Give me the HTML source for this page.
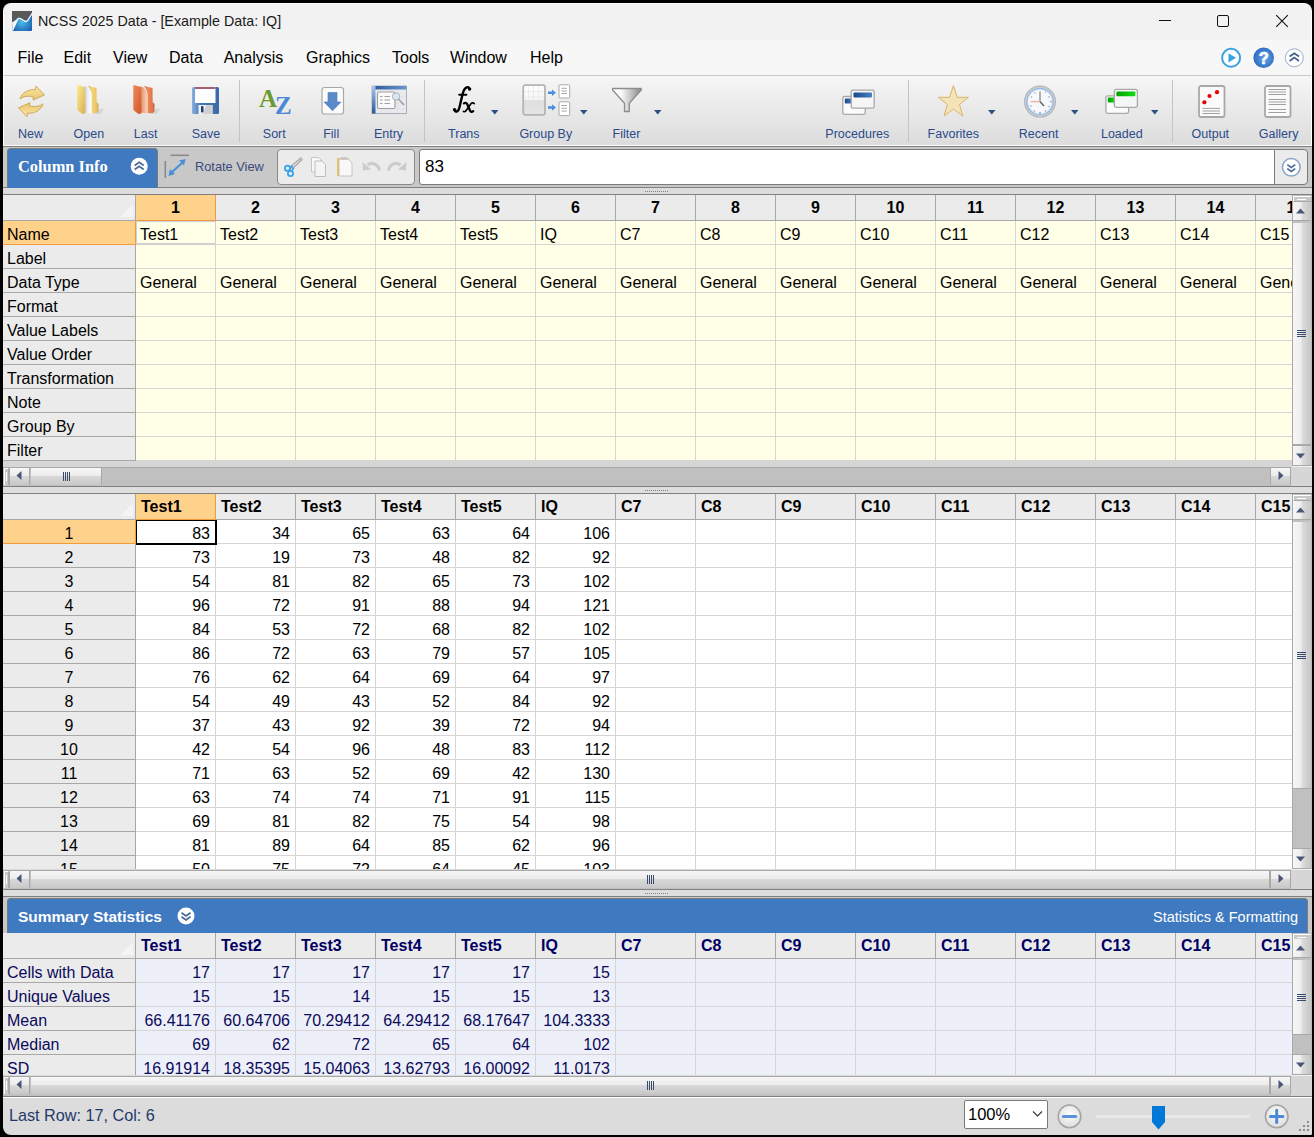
<!DOCTYPE html><html><head><meta charset="utf-8"><style>
*{box-sizing:border-box;margin:0;padding:0}
html,body{width:1314px;height:1137px;overflow:hidden;background:#f2f2f2}
body{position:relative;font-family:"Liberation Sans",sans-serif;color:#000}
.a{position:absolute}
.t{position:absolute;white-space:nowrap}
.g{position:absolute;overflow:hidden}
.c{position:absolute;white-space:nowrap;overflow:hidden;font-size:16px;line-height:24px;padding-top:2px}
.hb{font-weight:bold}
.rh{background:#ebebeb;border-right:1px solid #a8a8a8;border-bottom:1px solid #a8a8a8;padding-left:4px}
.ch{background:#ebebeb;border-right:1px solid #a8a8a8;border-bottom:1px solid #a8a8a8}
.cl{border-right:1px solid #d5d5d5;border-bottom:1px solid #d5d5d5}
.sel{background:#ffd28c!important;border-color:#f59a3c!important}
#frame{position:absolute;left:3px;top:3px;width:1309px;height:1132px;border-radius:8px 8px 1px 8px;box-shadow:0 0 0 40px #000;z-index:99;pointer-events:none}
</style></head><body><div class="a" style="left:3px;top:3px;width:1310px;height:37px;background:#f2f2f2;border-top:1px solid #fff;border-left:1px solid #fff"></div>
<div class="t" style="left:38px;top:13px;font-size:14.3px;color:#1a1a1a">NCSS 2025 Data - [Example Data: IQ]</div>
<div class="a" style="left:3px;top:40px;width:1309px;height:36px;background:#f7f7f7;border-bottom:1px solid #c8c8c8;border-left:1px solid #fff"></div>
<div class="t" style="left:17.6px;top:49px;font-size:16px;color:#000">File</div><div class="t" style="left:63.5px;top:49px;font-size:16px;color:#000">Edit</div><div class="t" style="left:113.0px;top:49px;font-size:16px;color:#000">View</div><div class="t" style="left:169.0px;top:49px;font-size:16px;color:#000">Data</div><div class="t" style="left:223.7px;top:49px;font-size:16px;color:#000">Analysis</div><div class="t" style="left:306.0px;top:49px;font-size:16px;color:#000">Graphics</div><div class="t" style="left:392.0px;top:49px;font-size:16px;color:#000">Tools</div><div class="t" style="left:450.0px;top:49px;font-size:16px;color:#000">Window</div><div class="t" style="left:530.0px;top:49px;font-size:16px;color:#000">Help</div>
<div class="a" style="left:3px;top:76px;width:1309px;height:69px;background:linear-gradient(#f6f6f6,#dcdcdc);border-left:1px solid #fff"></div>
<div class="a" style="left:3px;top:145px;width:1309px;height:1px;background:#fafafa"></div>
<div class="a" style="left:3px;top:146px;width:1309px;height:42px;background:#c8c8c8;border-top:1px solid #808080;border-bottom:1px solid #808080"></div>
<div class="a" style="left:3px;top:188px;width:1309px;height:7px;background:#dcdcdc;border-bottom:1px solid #808080"></div>
<div class="t" style="left:-19.4px;top:127px;width:100px;text-align:center;font-size:12.5px;color:#2a4a8a">New</div>
<div class="t" style="left:38.9px;top:127px;width:100px;text-align:center;font-size:12.5px;color:#2a4a8a">Open</div>
<div class="t" style="left:95.6px;top:127px;width:100px;text-align:center;font-size:12.5px;color:#2a4a8a">Last</div>
<div class="t" style="left:155.9px;top:127px;width:100px;text-align:center;font-size:12.5px;color:#2a4a8a">Save</div>
<div class="t" style="left:224.3px;top:127px;width:100px;text-align:center;font-size:12.5px;color:#2a4a8a">Sort</div>
<div class="t" style="left:281.2px;top:127px;width:100px;text-align:center;font-size:12.5px;color:#2a4a8a">Fill</div>
<div class="t" style="left:338.5px;top:127px;width:100px;text-align:center;font-size:12.5px;color:#2a4a8a">Entry</div>
<div class="t" style="left:413.8px;top:127px;width:100px;text-align:center;font-size:12.5px;color:#2a4a8a">Trans</div>
<div class="t" style="left:495.8px;top:127px;width:100px;text-align:center;font-size:12.5px;color:#2a4a8a">Group By</div>
<div class="t" style="left:576.5px;top:127px;width:100px;text-align:center;font-size:12.5px;color:#2a4a8a">Filter</div>
<div class="t" style="left:807.3px;top:127px;width:100px;text-align:center;font-size:12.5px;color:#2a4a8a">Procedures</div>
<div class="t" style="left:903.3px;top:127px;width:100px;text-align:center;font-size:12.5px;color:#2a4a8a">Favorites</div>
<div class="t" style="left:988.6px;top:127px;width:100px;text-align:center;font-size:12.5px;color:#2a4a8a">Recent</div>
<div class="t" style="left:1071.8px;top:127px;width:100px;text-align:center;font-size:12.5px;color:#2a4a8a">Loaded</div>
<div class="t" style="left:1160.3px;top:127px;width:100px;text-align:center;font-size:12.5px;color:#2a4a8a">Output</div>
<div class="t" style="left:1228.6px;top:127px;width:100px;text-align:center;font-size:12.5px;color:#2a4a8a">Gallery</div>
<div class="a" style="left:239px;top:80px;width:1px;height:62px;background:#c4c4c4"></div>
<div class="a" style="left:424px;top:80px;width:1px;height:62px;background:#c4c4c4"></div>
<div class="a" style="left:908px;top:80px;width:1px;height:62px;background:#c4c4c4"></div>
<div class="a" style="left:1172px;top:80px;width:1px;height:62px;background:#c4c4c4"></div>
<svg class="a" style="left:491px;top:110px" width="8" height="5"><path d="M0,0H7.5L3.75,4.5Z" fill="#2c4f80"/></svg>
<svg class="a" style="left:580px;top:110px" width="8" height="5"><path d="M0,0H7.5L3.75,4.5Z" fill="#2c4f80"/></svg>
<svg class="a" style="left:654px;top:110px" width="8" height="5"><path d="M0,0H7.5L3.75,4.5Z" fill="#2c4f80"/></svg>
<svg class="a" style="left:988px;top:110px" width="8" height="5"><path d="M0,0H7.5L3.75,4.5Z" fill="#2c4f80"/></svg>
<svg class="a" style="left:1071px;top:110px" width="8" height="5"><path d="M0,0H7.5L3.75,4.5Z" fill="#2c4f80"/></svg>
<svg class="a" style="left:1151px;top:110px" width="8" height="5"><path d="M0,0H7.5L3.75,4.5Z" fill="#2c4f80"/></svg>
<svg class="a" style="left:10px;top:80px" width="45" height="45" viewBox="0 0 45 45">
<defs><linearGradient id="gold" x1="0" y1="0" x2="0" y2="1"><stop offset="0" stop-color="#fbe8a8"/><stop offset="1" stop-color="#e6c468"/></linearGradient></defs>
<path id="arr" d="M10,19 C12,12 19,9 25.5,9.8 L26,6 L34.5,15 L23,20 L23.5,17 C18,15.5 13,16.5 10,19 Z" fill="url(#gold)" stroke="#c9a458" stroke-width="0.9"/>
<path d="M10,19 C12,12 19,9 25.5,9.8 L26,6 L34.5,15 L23,20 L23.5,17 C18,15.5 13,16.5 10,19 Z" transform="rotate(180 21.5 21.4)" fill="url(#gold)" stroke="#c9a458" stroke-width="0.9"/>
</svg>
<svg class="a" style="left:70px;top:80px" width="40" height="40" viewBox="0 0 40 40">
<defs><linearGradient id="fy" x1="0" y1="0" x2="1" y2="1"><stop offset="0" stop-color="#fbe98c"/><stop offset="1" stop-color="#dcb050"/></linearGradient>
<linearGradient id="fr" x1="0" y1="0" x2="1" y2="0"><stop offset="0" stop-color="#c89a40"/><stop offset="0.4" stop-color="#f4d67c"/><stop offset="1" stop-color="#e8c468"/></linearGradient>
<linearGradient id="fp" x1="0" y1="0" x2="1" y2="0"><stop offset="0" stop-color="#b8bec8"/><stop offset="0.45" stop-color="#e8eaee"/><stop offset="1" stop-color="#ffffff"/></linearGradient></defs>
<path d="M28,30 L34,28.5 L31,34 L24,34Z" fill="#c4c4c4" opacity="0.55"/>
<path d="M18,6 L26.5,8 L26.8,33 L21.5,33.3 L21.5,14 C21,10 19.5,7.5 18,6 Z" fill="url(#fr)"/>
<path d="M26.5,22 L28.6,24 L28.4,31.5 L26.6,33 Z" fill="#d8b258"/>
<path d="M14,6.5 C17,6.5 20.5,9 21.5,14 L21.5,33.5 L15,32.5 Z" fill="url(#fp)"/>
<path d="M7.3,5 L13.5,6.5 C14.8,8 15,9.5 15,12 L15.3,33.5 L12.5,34 L7.3,30 Z" fill="url(#fy)"/>
</svg>
<svg class="a" style="left:126px;top:80px" width="40" height="40" viewBox="0 0 40 40">
<defs><linearGradient id="oy" x1="0" y1="0" x2="1" y2="1"><stop offset="0" stop-color="#f08858"/><stop offset="1" stop-color="#d0582c"/></linearGradient>
<linearGradient id="or" x1="0" y1="0" x2="1" y2="0"><stop offset="0" stop-color="#c05028"/><stop offset="0.4" stop-color="#ec8a5c"/><stop offset="1" stop-color="#e07044"/></linearGradient>
<linearGradient id="op" x1="0" y1="0" x2="1" y2="0"><stop offset="0" stop-color="#d87850"/><stop offset="0.5" stop-color="#f0b090"/><stop offset="1" stop-color="#f8d0b8"/></linearGradient></defs>
<path d="M28,30 L34,28.5 L31,34 L24,34Z" fill="#c4c4c4" opacity="0.55"/>
<path d="M18,6 L26.5,8 L26.8,33 L21.5,33.3 L21.5,14 C21,10 19.5,7.5 18,6 Z" fill="url(#or)"/>
<path d="M26.5,22 L28.6,24 L28.4,31.5 L26.6,33 Z" fill="#d06838"/>
<path d="M14,6.5 C17,6.5 20.5,9 21.5,14 L21.5,33.5 L15,32.5 Z" fill="url(#op)"/>
<path d="M7.3,5 L13.5,6.5 C14.8,8 15,9.5 15,12 L15.3,33.5 L12.5,34 L7.3,30 Z" fill="url(#oy)"/>
</svg>
<svg class="a" style="left:185px;top:80px" width="45" height="45" viewBox="0 0 45 45">
<defs><linearGradient id="fb" x1="0" y1="0" x2="1" y2="0"><stop offset="0" stop-color="#8ab0e0"/><stop offset="0.3" stop-color="#4a7ab8"/><stop offset="1" stop-color="#3a68a8"/></linearGradient></defs>
<rect x="7" y="7" width="27" height="27" rx="1.5" fill="url(#fb)"/>
<rect x="10" y="7" width="20.5" height="16" fill="#fdfdfd"/>
<rect x="10" y="7" width="20.5" height="2" fill="#a86070"/>
<rect x="13.5" y="25" width="14" height="9" fill="#f0f0f0"/>
<path d="M21,25 H27.5 V34 H18 Z" fill="#d0d0d0"/>
<rect x="16" y="26" width="2.5" height="6.5" rx="1" fill="#1a3c78"/>
</svg>
<div class="t" style="left:259px;top:85px;font-family:'Liberation Serif',serif;font-weight:bold;font-size:25px;line-height:28px;color:#6a9a30">A</div>
<div class="t" style="left:275px;top:92px;font-family:'Liberation Serif',serif;font-weight:bold;font-size:25px;line-height:28px;color:#4a88d8">Z</div>
<svg class="a" style="left:315px;top:80px" width="35" height="40" viewBox="0 0 35 40">
<rect x="7" y="7.5" width="21.5" height="26.5" rx="2.5" fill="#fbfbfb" stroke="#a8a8a8" stroke-width="1.2"/>
<path d="M13,12.5 H22 V22 H26 L17.5,30.8 L9,22 H13 Z" fill="#5a8ac8" stroke="#4a7ab8" stroke-width="0.6"/>
</svg>
<svg class="a" style="left:370px;top:84px" width="40" height="32" viewBox="0 0 40 32">
<defs><linearGradient id="eb" x1="0" y1="0" x2="1" y2="0"><stop offset="0" stop-color="#2a5898"/><stop offset="1" stop-color="#6a98d0"/></linearGradient>
<linearGradient id="el" x1="0" y1="0" x2="0" y2="1"><stop offset="0" stop-color="#a8c8f0"/><stop offset="1" stop-color="#2a5898"/></linearGradient></defs>
<rect x="2" y="2" width="34.5" height="27.5" fill="#e8eaee" stroke="#9aa0a8" stroke-width="0.8"/>
<rect x="2" y="2" width="34.5" height="3.5" fill="url(#eb)"/>
<rect x="2" y="2" width="3.5" height="27.5" fill="url(#el)"/>
<path d="M6,13H36M6,19H36M6,25H36M12,6V29M20,6V29M28,6V29" stroke="#d8dce2" stroke-width="0.6"/>
<rect x="7.5" y="8" width="17.5" height="16.5" rx="1.5" fill="#fafafa" stroke="#a0a0a0" stroke-width="1.2"/>
<path d="M10,12.5H12.5M14.5,12.5H20M10,16H12.5M14.5,16H20M10,19.5H12.5M14.5,19.5H20" stroke="#a0a0a0" stroke-width="1.2"/>
<circle cx="26" cy="12.5" r="3.6" fill="#d8e8f8" stroke="#b0b0b0" stroke-width="1"/>
<path d="M28.5,15 L34,21" stroke="#a0a0a0" stroke-width="1.5"/>
</svg>
<svg class="a" style="left:445px;top:80px" width="35" height="40" viewBox="0 0 35 40">
<g fill="none" stroke="#000" stroke-linecap="round">
<path d="M9.6,30.3 C11,32.6 13.4,31.6 14.3,28 L17.6,14 C18.8,9 20.6,6.8 23.6,7.4" stroke-width="2.4"/>
<path d="M14.2,14.8 H21.4" stroke-width="1.9"/>
<path d="M18.9,23.4 C20.6,22.2 21.9,23 22.6,25 L25,30.5 C25.6,32 26.8,32.4 28.2,31.2" stroke-width="2.3"/>
<path d="M29.3,23.6 C28.1,22.3 26.6,22.8 25.6,24.2 L21.1,30.5 C20.4,31.6 19.4,32.1 18.4,31.3" stroke-width="1.6"/>
</g>
<circle cx="24.6" cy="9" r="1.7"/><circle cx="9.6" cy="29.6" r="1.7"/>
</svg>
<svg class="a" style="left:515px;top:80px" width="60" height="40" viewBox="0 0 60 40">
<defs><linearGradient id="gg" x1="0" y1="0" x2="0" y2="1"><stop offset="0" stop-color="#ffffff"/><stop offset="0.5" stop-color="#f4f4f4"/><stop offset="0.52" stop-color="#dedede"/><stop offset="1" stop-color="#e6e6e6"/></linearGradient></defs>
<rect x="8.2" y="5.2" width="21.8" height="29.6" rx="2" fill="url(#gg)" stroke="#b4b4b4" stroke-width="1.8"/>
<path d="M9,11.5H29M9,17H29M9,23H29M9,28.5H29M13.5,6V34M18.5,6V34M23.5,6V34" stroke="#e0e0e0" stroke-width="0.5"/>
<path d="M33,11.5H37V9.5L41,12.7L37,16V14H33Z" fill="#4a90e0"/>
<path d="M33,26.3H37V24.3L41,27.5L37,30.8V28.8H33Z" fill="#4a90e0"/>
<rect x="44" y="4.8" width="10.7" height="13.2" rx="1" fill="#fff" stroke="#a8a8a8" stroke-width="1"/>
<rect x="44" y="21.8" width="10.7" height="13.8" rx="1" fill="#fff" stroke="#a8a8a8" stroke-width="1"/>
<path d="M46.5,8.3H52M46.5,11H52M46.5,13.5H52M46.5,25.5H52M46.5,28.3H52M46.5,31H52" stroke="#909090" stroke-width="0.8"/>
</svg>
<svg class="a" style="left:605px;top:80px" width="45" height="40" viewBox="0 0 45 40">
<defs><linearGradient id="fg" x1="0" y1="0" x2="1" y2="0"><stop offset="0" stop-color="#ffffff"/><stop offset="0.3" stop-color="#fafafa"/><stop offset="1" stop-color="#8a8a8a"/></linearGradient></defs>
<path d="M7.6,8.5 L36.2,8.5 L36.2,10 L24.3,23.3 V31.5 H19.5 V23.3 L7.6,10 Z" fill="url(#fg)" stroke="#8c8c8c" stroke-width="1.3" stroke-linejoin="round"/>
</svg>
<svg class="a" style="left:835px;top:80px" width="50" height="35" viewBox="0 0 50 35">
<defs><linearGradient id="b1a4888" x1="0" y1="0" x2="1" y2="0"><stop offset="0" stop-color="#1a4888"/><stop offset="1" stop-color="#4a80c0"/></linearGradient></defs>
<rect x="7.8" y="16.5" width="22.5" height="17.8" rx="1.8" fill="#fbfbfb" stroke="#a8a8a8" stroke-width="1.3"/>
<rect x="9.8" y="18.5" width="8.0" height="5.0" rx="1" fill="url(#b1a4888)"/>
<rect x="16.2" y="10.2" width="23.0" height="18.0" rx="1.8" fill="#f6f6f6" stroke="#a8a8a8" stroke-width="1.3"/>
<rect x="18.5" y="12.5" width="18.5" height="5.0" rx="1" fill="url(#b1a4888)"/>
</svg>
<svg class="a" style="left:1095px;top:80px" width="50" height="35" viewBox="0 0 50 35">
<defs><linearGradient id="b00a000" x1="0" y1="0" x2="1" y2="0"><stop offset="0" stop-color="#00a000"/><stop offset="1" stop-color="#10e010"/></linearGradient></defs>
<rect x="10.9" y="15.8" width="22.7" height="17.6" rx="1.8" fill="#fbfbfb" stroke="#a8a8a8" stroke-width="1.3"/>
<rect x="12.8" y="17.6" width="8.0" height="5.0" rx="1" fill="url(#b00a000)"/>
<rect x="19.4" y="9.3" width="23.0" height="18.0" rx="1.8" fill="#f6f6f6" stroke="#a8a8a8" stroke-width="1.3"/>
<rect x="21.4" y="11.5" width="19.0" height="4.8" rx="1" fill="url(#b00a000)"/>
</svg>
<svg class="a" style="left:930px;top:80px" width="45" height="40" viewBox="0 0 45 40">
<path d="M23.4,5.6 L27.3,17.3 L38.4,17.3 L29.5,24.4 L32.8,36 L23.4,29 L14.1,36 L17.4,24.4 L8.3,17.3 L19.5,17.3 Z" fill="#f5e3b8" stroke="#dab468" stroke-width="1" stroke-linejoin="round"/>
</svg>
<svg class="a" style="left:1015px;top:80px" width="50" height="45" viewBox="0 0 50 45">
<defs><radialGradient id="cf" cx="0.5" cy="0.5" r="0.5"><stop offset="0.8" stop-color="#f6f8fc"/><stop offset="1" stop-color="#e0e8f4"/></radialGradient></defs>
<circle cx="25" cy="21.6" r="15.4" fill="#d4d4d4" stroke="#b4b4b4" stroke-width="1.2"/>
<circle cx="25" cy="21.6" r="13.2" fill="url(#cf)" stroke="#98bce8" stroke-width="1.5"/>
<path d="M25,21.6V11.5" stroke="#909090" stroke-width="1.4"/>
<path d="M25,21.6L29,26" stroke="#707070" stroke-width="1.6"/>
<path d="M25,21.6H15.5" stroke="#f0b0a0" stroke-width="1.4"/>
<g fill="#a0a0a0"><circle cx="25" cy="33" r="0.9"/><circle cx="36" cy="21.6" r="0.9"/><circle cx="30.5" cy="12" r="0.7"/><circle cx="34" cy="17" r="0.8"/><circle cx="34" cy="26.5" r="0.8"/><circle cx="30.5" cy="31" r="0.8"/><circle cx="19.5" cy="31" r="0.8"/><circle cx="16" cy="26" r="0.8"/><circle cx="16.5" cy="17" r="0.7"/><circle cx="20" cy="13" r="0.7"/></g>
</svg>
<svg class="a" style="left:1195px;top:82px" width="35" height="40" viewBox="0 0 35 40">
<rect x="4" y="4" width="25.5" height="31" rx="2" fill="#fafafa" stroke="#a8a8a8" stroke-width="1.8"/>
<circle cx="9.4" cy="20.3" r="2.1" fill="#e80000"/><circle cx="14.5" cy="14" r="2.1" fill="#e80000"/><circle cx="22" cy="10.2" r="2.1" fill="#e80000"/>
<path d="M7.5,26.4H25M7.5,29H25M7.5,31.5H25" stroke="#a0a0a0" stroke-width="1"/>
</svg>
<svg class="a" style="left:1261px;top:82px" width="35" height="40" viewBox="0 0 35 40">
<rect x="4" y="4" width="25.5" height="31" rx="2" fill="#fafafa" stroke="#a8a8a8" stroke-width="1.8"/>
<path d="M7.5,7.5H25M7.5,10H25M7.5,12.5H25M7.5,17.5H25M7.5,20H25M7.5,22.5H25M7.5,27.5H25M7.5,30.5H25" stroke="#a0a0a0" stroke-width="1"/>
</svg>
<svg class="a" style="left:1215px;top:42px" width="95" height="32" viewBox="0 0 95 32">
<defs><radialGradient id="hq" cx="0.55" cy="0.5" r="0.55"><stop offset="0" stop-color="#6aa4e8"/><stop offset="1" stop-color="#2a6ac0"/></radialGradient></defs>
<circle cx="16.1" cy="15.8" r="9" fill="#fff" stroke="#3aa2e2" stroke-width="2"/>
<path d="M13.5,11.2 L21,15.8 L13.5,20.4Z" fill="#3aa2e2"/>
<circle cx="48.7" cy="15.8" r="10.3" fill="url(#hq)"/>
<text x="48.7" y="21.6" font-family="Liberation Sans" font-weight="bold" font-size="16.5" fill="#fff" stroke="#fff" stroke-width="0.6" text-anchor="middle">?</text>
<circle cx="79.3" cy="15.8" r="9" fill="#fff" stroke="#98acc8" stroke-width="1"/>
<path d="M74.6,14.6 L79.3,11.3 L84,14.6 M74.6,18.9 L79.3,15.6 L84,18.9" fill="none" stroke="#44608c" stroke-width="1.8"/>
</svg>
<div class="a" style="left:7px;top:148px;width:151px;height:40px;background:#3f79bf;border:1px solid #7a7a78;border-bottom:none;border-radius:4px 4px 0 0"></div>
<div class="t" style="left:18px;top:157px;font-family:'Liberation Serif',serif;font-size:16.4px;font-weight:bold;color:#fff">Column Info</div>
<svg class="a" style="left:129px;top:156px" width="21" height="21" viewBox="0 0 21 21">
<circle cx="10.2" cy="10.2" r="8.5" fill="#fff"/>
<path d="M5.7,9.5 L10.2,6.3 L14.7,9.5 M5.7,13.5 L10.2,10.3 L14.7,13.5" fill="none" stroke="#4a6a98" stroke-width="1.7"/>
</svg>
<svg class="a" style="left:160px;top:150px" width="32" height="32" viewBox="0 0 32 32">
<rect x="4.5" y="11" width="1.6" height="17" fill="#8a8a8a"/>
<rect x="10.5" y="4.5" width="18.5" height="1.6" fill="#8a8a8a"/>
<path d="M11,23 L23,12" stroke="#4a90d8" stroke-width="2.2"/>
<path d="M8.5,26 L10,19 L15,24Z M25.5,9 L19,10.5 L24,15.5Z" fill="#4a90d8"/>
</svg>
<div class="t" style="left:195px;top:159px;font-size:12.8px;color:#3a4a7a">Rotate View</div>
<div class="a" style="left:277px;top:149px;width:138px;height:36px;background:#ebebeb;border:1px solid #8a8a8a;border-radius:4px"></div>
<svg class="a" style="left:280px;top:152px" width="132" height="30" viewBox="0 0 132 30">
<path d="M10,15 L21.5,5.5 M12,17 L22.5,7" stroke="#a8a8a8" stroke-width="1.4"/>
<circle cx="7.5" cy="16.3" r="2.6" fill="none" stroke="#3aa0e8" stroke-width="1.8"/>
<circle cx="10.5" cy="21.5" r="2.6" fill="none" stroke="#3aa0e8" stroke-width="1.8"/>
<path d="M9.5,16.5 L13,14 M11,19.5 L14,16" stroke="#3aa0e8" stroke-width="1.6"/>
<path d="M31.5,5.5 H38.5 L41,8 V20 H31.5 Z" fill="#f8f8f8" stroke="#c0c0c0" stroke-width="0.9"/>
<path d="M35,9 H42 L45.5,12.5 V24.5 H35 Z" fill="#f4f4f4" stroke="#b8b8b8" stroke-width="0.9"/>
<rect x="57" y="6" width="12" height="18" fill="#e8c060"/>
<path d="M59,7 H68 L72,11 V24 H59 Z" fill="#f8f8f8" stroke="#c0c0c0" stroke-width="0.9"/>
<rect x="61" y="5" width="6" height="3" fill="#c8c8c8"/>
<path d="M99.5,18.5 C98,11.5 92,9.8 87.5,13" fill="none" stroke="#cccccc" stroke-width="3.2"/>
<path d="M82.5,10 L83,18.5 L91,17.5 Z" fill="#cccccc"/>
<path d="M108.5,18.5 C110,11.5 116,9.8 120.5,13" fill="none" stroke="#cccccc" stroke-width="3.2"/>
<path d="M126.5,10 L126,18.5 L118,17.5 Z" fill="#cccccc"/>
</svg>
<div class="a" style="left:419px;top:149px;width:856px;height:36px;background:#fff;border:1px solid #7a7a7a;border-radius:3px 0 0 3px"></div>
<div class="t" style="left:425px;top:157px;font-size:17px;color:#000">83</div>
<div class="a" style="left:1274px;top:149px;width:34px;height:36px;background:#ebebeb;border:1px solid #7a7a7a;border-radius:0 4px 4px 0"></div>
<svg class="a" style="left:1281px;top:157px" width="21" height="21" viewBox="0 0 21 21">
<circle cx="10.3" cy="10.3" r="8.8" fill="#fff" stroke="#8aa4c8" stroke-width="1.5"/>
<path d="M6.3,7.6 L10.3,10.4 L14.3,7.6 M6.3,11.6 L10.3,14.4 L14.3,11.6" fill="none" stroke="#4a6a98" stroke-width="1.7"/>
</svg>
<div class="g" style="left:3px;top:195px;width:1289px;height:266px;background:#fffee6"><div class="c ch" style="left:0;top:0;width:133px;height:26px"></div><div class="c ch hb sel" style="left:133px;top:0;width:80px;height:26px;line-height:26px;padding-top:0;text-align:center;color:#000">1</div><div class="c ch hb" style="left:213px;top:0;width:80px;height:26px;line-height:26px;padding-top:0;text-align:center;color:#000">2</div><div class="c ch hb" style="left:293px;top:0;width:80px;height:26px;line-height:26px;padding-top:0;text-align:center;color:#000">3</div><div class="c ch hb" style="left:373px;top:0;width:80px;height:26px;line-height:26px;padding-top:0;text-align:center;color:#000">4</div><div class="c ch hb" style="left:453px;top:0;width:80px;height:26px;line-height:26px;padding-top:0;text-align:center;color:#000">5</div><div class="c ch hb" style="left:533px;top:0;width:80px;height:26px;line-height:26px;padding-top:0;text-align:center;color:#000">6</div><div class="c ch hb" style="left:613px;top:0;width:80px;height:26px;line-height:26px;padding-top:0;text-align:center;color:#000">7</div><div class="c ch hb" style="left:693px;top:0;width:80px;height:26px;line-height:26px;padding-top:0;text-align:center;color:#000">8</div><div class="c ch hb" style="left:773px;top:0;width:80px;height:26px;line-height:26px;padding-top:0;text-align:center;color:#000">9</div><div class="c ch hb" style="left:853px;top:0;width:80px;height:26px;line-height:26px;padding-top:0;text-align:center;color:#000">10</div><div class="c ch hb" style="left:933px;top:0;width:80px;height:26px;line-height:26px;padding-top:0;text-align:center;color:#000">11</div><div class="c ch hb" style="left:1013px;top:0;width:80px;height:26px;line-height:26px;padding-top:0;text-align:center;color:#000">12</div><div class="c ch hb" style="left:1093px;top:0;width:80px;height:26px;line-height:26px;padding-top:0;text-align:center;color:#000">13</div><div class="c ch hb" style="left:1173px;top:0;width:80px;height:26px;line-height:26px;padding-top:0;text-align:center;color:#000">14</div><div class="c ch hb" style="left:1253px;top:0;width:80px;height:26px;line-height:26px;padding-top:0;text-align:center;color:#000">15</div><div class="c rh sel" style="left:0;top:26px;width:133px;height:24px;;color:#000">Name</div><div class="c cl" style="left:133px;top:26px;width:80px;height:24px;padding-left:4px;color:#000">Test1</div><div class="c cl" style="left:213px;top:26px;width:80px;height:24px;padding-left:4px;color:#000">Test2</div><div class="c cl" style="left:293px;top:26px;width:80px;height:24px;padding-left:4px;color:#000">Test3</div><div class="c cl" style="left:373px;top:26px;width:80px;height:24px;padding-left:4px;color:#000">Test4</div><div class="c cl" style="left:453px;top:26px;width:80px;height:24px;padding-left:4px;color:#000">Test5</div><div class="c cl" style="left:533px;top:26px;width:80px;height:24px;padding-left:4px;color:#000">IQ</div><div class="c cl" style="left:613px;top:26px;width:80px;height:24px;padding-left:4px;color:#000">C7</div><div class="c cl" style="left:693px;top:26px;width:80px;height:24px;padding-left:4px;color:#000">C8</div><div class="c cl" style="left:773px;top:26px;width:80px;height:24px;padding-left:4px;color:#000">C9</div><div class="c cl" style="left:853px;top:26px;width:80px;height:24px;padding-left:4px;color:#000">C10</div><div class="c cl" style="left:933px;top:26px;width:80px;height:24px;padding-left:4px;color:#000">C11</div><div class="c cl" style="left:1013px;top:26px;width:80px;height:24px;padding-left:4px;color:#000">C12</div><div class="c cl" style="left:1093px;top:26px;width:80px;height:24px;padding-left:4px;color:#000">C13</div><div class="c cl" style="left:1173px;top:26px;width:80px;height:24px;padding-left:4px;color:#000">C14</div><div class="c cl" style="left:1253px;top:26px;width:80px;height:24px;padding-left:4px;color:#000">C15</div><div class="c rh" style="left:0;top:50px;width:133px;height:24px;;color:#000">Label</div><div class="c cl" style="left:133px;top:50px;width:80px;height:24px;padding-left:4px;color:#000"></div><div class="c cl" style="left:213px;top:50px;width:80px;height:24px;padding-left:4px;color:#000"></div><div class="c cl" style="left:293px;top:50px;width:80px;height:24px;padding-left:4px;color:#000"></div><div class="c cl" style="left:373px;top:50px;width:80px;height:24px;padding-left:4px;color:#000"></div><div class="c cl" style="left:453px;top:50px;width:80px;height:24px;padding-left:4px;color:#000"></div><div class="c cl" style="left:533px;top:50px;width:80px;height:24px;padding-left:4px;color:#000"></div><div class="c cl" style="left:613px;top:50px;width:80px;height:24px;padding-left:4px;color:#000"></div><div class="c cl" style="left:693px;top:50px;width:80px;height:24px;padding-left:4px;color:#000"></div><div class="c cl" style="left:773px;top:50px;width:80px;height:24px;padding-left:4px;color:#000"></div><div class="c cl" style="left:853px;top:50px;width:80px;height:24px;padding-left:4px;color:#000"></div><div class="c cl" style="left:933px;top:50px;width:80px;height:24px;padding-left:4px;color:#000"></div><div class="c cl" style="left:1013px;top:50px;width:80px;height:24px;padding-left:4px;color:#000"></div><div class="c cl" style="left:1093px;top:50px;width:80px;height:24px;padding-left:4px;color:#000"></div><div class="c cl" style="left:1173px;top:50px;width:80px;height:24px;padding-left:4px;color:#000"></div><div class="c cl" style="left:1253px;top:50px;width:80px;height:24px;padding-left:4px;color:#000"></div><div class="c rh" style="left:0;top:74px;width:133px;height:24px;;color:#000">Data Type</div><div class="c cl" style="left:133px;top:74px;width:80px;height:24px;padding-left:4px;color:#000">General</div><div class="c cl" style="left:213px;top:74px;width:80px;height:24px;padding-left:4px;color:#000">General</div><div class="c cl" style="left:293px;top:74px;width:80px;height:24px;padding-left:4px;color:#000">General</div><div class="c cl" style="left:373px;top:74px;width:80px;height:24px;padding-left:4px;color:#000">General</div><div class="c cl" style="left:453px;top:74px;width:80px;height:24px;padding-left:4px;color:#000">General</div><div class="c cl" style="left:533px;top:74px;width:80px;height:24px;padding-left:4px;color:#000">General</div><div class="c cl" style="left:613px;top:74px;width:80px;height:24px;padding-left:4px;color:#000">General</div><div class="c cl" style="left:693px;top:74px;width:80px;height:24px;padding-left:4px;color:#000">General</div><div class="c cl" style="left:773px;top:74px;width:80px;height:24px;padding-left:4px;color:#000">General</div><div class="c cl" style="left:853px;top:74px;width:80px;height:24px;padding-left:4px;color:#000">General</div><div class="c cl" style="left:933px;top:74px;width:80px;height:24px;padding-left:4px;color:#000">General</div><div class="c cl" style="left:1013px;top:74px;width:80px;height:24px;padding-left:4px;color:#000">General</div><div class="c cl" style="left:1093px;top:74px;width:80px;height:24px;padding-left:4px;color:#000">General</div><div class="c cl" style="left:1173px;top:74px;width:80px;height:24px;padding-left:4px;color:#000">General</div><div class="c cl" style="left:1253px;top:74px;width:80px;height:24px;padding-left:4px;color:#000">General</div><div class="c rh" style="left:0;top:98px;width:133px;height:24px;;color:#000">Format</div><div class="c cl" style="left:133px;top:98px;width:80px;height:24px;padding-left:4px;color:#000"></div><div class="c cl" style="left:213px;top:98px;width:80px;height:24px;padding-left:4px;color:#000"></div><div class="c cl" style="left:293px;top:98px;width:80px;height:24px;padding-left:4px;color:#000"></div><div class="c cl" style="left:373px;top:98px;width:80px;height:24px;padding-left:4px;color:#000"></div><div class="c cl" style="left:453px;top:98px;width:80px;height:24px;padding-left:4px;color:#000"></div><div class="c cl" style="left:533px;top:98px;width:80px;height:24px;padding-left:4px;color:#000"></div><div class="c cl" style="left:613px;top:98px;width:80px;height:24px;padding-left:4px;color:#000"></div><div class="c cl" style="left:693px;top:98px;width:80px;height:24px;padding-left:4px;color:#000"></div><div class="c cl" style="left:773px;top:98px;width:80px;height:24px;padding-left:4px;color:#000"></div><div class="c cl" style="left:853px;top:98px;width:80px;height:24px;padding-left:4px;color:#000"></div><div class="c cl" style="left:933px;top:98px;width:80px;height:24px;padding-left:4px;color:#000"></div><div class="c cl" style="left:1013px;top:98px;width:80px;height:24px;padding-left:4px;color:#000"></div><div class="c cl" style="left:1093px;top:98px;width:80px;height:24px;padding-left:4px;color:#000"></div><div class="c cl" style="left:1173px;top:98px;width:80px;height:24px;padding-left:4px;color:#000"></div><div class="c cl" style="left:1253px;top:98px;width:80px;height:24px;padding-left:4px;color:#000"></div><div class="c rh" style="left:0;top:122px;width:133px;height:24px;;color:#000">Value Labels</div><div class="c cl" style="left:133px;top:122px;width:80px;height:24px;padding-left:4px;color:#000"></div><div class="c cl" style="left:213px;top:122px;width:80px;height:24px;padding-left:4px;color:#000"></div><div class="c cl" style="left:293px;top:122px;width:80px;height:24px;padding-left:4px;color:#000"></div><div class="c cl" style="left:373px;top:122px;width:80px;height:24px;padding-left:4px;color:#000"></div><div class="c cl" style="left:453px;top:122px;width:80px;height:24px;padding-left:4px;color:#000"></div><div class="c cl" style="left:533px;top:122px;width:80px;height:24px;padding-left:4px;color:#000"></div><div class="c cl" style="left:613px;top:122px;width:80px;height:24px;padding-left:4px;color:#000"></div><div class="c cl" style="left:693px;top:122px;width:80px;height:24px;padding-left:4px;color:#000"></div><div class="c cl" style="left:773px;top:122px;width:80px;height:24px;padding-left:4px;color:#000"></div><div class="c cl" style="left:853px;top:122px;width:80px;height:24px;padding-left:4px;color:#000"></div><div class="c cl" style="left:933px;top:122px;width:80px;height:24px;padding-left:4px;color:#000"></div><div class="c cl" style="left:1013px;top:122px;width:80px;height:24px;padding-left:4px;color:#000"></div><div class="c cl" style="left:1093px;top:122px;width:80px;height:24px;padding-left:4px;color:#000"></div><div class="c cl" style="left:1173px;top:122px;width:80px;height:24px;padding-left:4px;color:#000"></div><div class="c cl" style="left:1253px;top:122px;width:80px;height:24px;padding-left:4px;color:#000"></div><div class="c rh" style="left:0;top:146px;width:133px;height:24px;;color:#000">Value Order</div><div class="c cl" style="left:133px;top:146px;width:80px;height:24px;padding-left:4px;color:#000"></div><div class="c cl" style="left:213px;top:146px;width:80px;height:24px;padding-left:4px;color:#000"></div><div class="c cl" style="left:293px;top:146px;width:80px;height:24px;padding-left:4px;color:#000"></div><div class="c cl" style="left:373px;top:146px;width:80px;height:24px;padding-left:4px;color:#000"></div><div class="c cl" style="left:453px;top:146px;width:80px;height:24px;padding-left:4px;color:#000"></div><div class="c cl" style="left:533px;top:146px;width:80px;height:24px;padding-left:4px;color:#000"></div><div class="c cl" style="left:613px;top:146px;width:80px;height:24px;padding-left:4px;color:#000"></div><div class="c cl" style="left:693px;top:146px;width:80px;height:24px;padding-left:4px;color:#000"></div><div class="c cl" style="left:773px;top:146px;width:80px;height:24px;padding-left:4px;color:#000"></div><div class="c cl" style="left:853px;top:146px;width:80px;height:24px;padding-left:4px;color:#000"></div><div class="c cl" style="left:933px;top:146px;width:80px;height:24px;padding-left:4px;color:#000"></div><div class="c cl" style="left:1013px;top:146px;width:80px;height:24px;padding-left:4px;color:#000"></div><div class="c cl" style="left:1093px;top:146px;width:80px;height:24px;padding-left:4px;color:#000"></div><div class="c cl" style="left:1173px;top:146px;width:80px;height:24px;padding-left:4px;color:#000"></div><div class="c cl" style="left:1253px;top:146px;width:80px;height:24px;padding-left:4px;color:#000"></div><div class="c rh" style="left:0;top:170px;width:133px;height:24px;;color:#000">Transformation</div><div class="c cl" style="left:133px;top:170px;width:80px;height:24px;padding-left:4px;color:#000"></div><div class="c cl" style="left:213px;top:170px;width:80px;height:24px;padding-left:4px;color:#000"></div><div class="c cl" style="left:293px;top:170px;width:80px;height:24px;padding-left:4px;color:#000"></div><div class="c cl" style="left:373px;top:170px;width:80px;height:24px;padding-left:4px;color:#000"></div><div class="c cl" style="left:453px;top:170px;width:80px;height:24px;padding-left:4px;color:#000"></div><div class="c cl" style="left:533px;top:170px;width:80px;height:24px;padding-left:4px;color:#000"></div><div class="c cl" style="left:613px;top:170px;width:80px;height:24px;padding-left:4px;color:#000"></div><div class="c cl" style="left:693px;top:170px;width:80px;height:24px;padding-left:4px;color:#000"></div><div class="c cl" style="left:773px;top:170px;width:80px;height:24px;padding-left:4px;color:#000"></div><div class="c cl" style="left:853px;top:170px;width:80px;height:24px;padding-left:4px;color:#000"></div><div class="c cl" style="left:933px;top:170px;width:80px;height:24px;padding-left:4px;color:#000"></div><div class="c cl" style="left:1013px;top:170px;width:80px;height:24px;padding-left:4px;color:#000"></div><div class="c cl" style="left:1093px;top:170px;width:80px;height:24px;padding-left:4px;color:#000"></div><div class="c cl" style="left:1173px;top:170px;width:80px;height:24px;padding-left:4px;color:#000"></div><div class="c cl" style="left:1253px;top:170px;width:80px;height:24px;padding-left:4px;color:#000"></div><div class="c rh" style="left:0;top:194px;width:133px;height:24px;;color:#000">Note</div><div class="c cl" style="left:133px;top:194px;width:80px;height:24px;padding-left:4px;color:#000"></div><div class="c cl" style="left:213px;top:194px;width:80px;height:24px;padding-left:4px;color:#000"></div><div class="c cl" style="left:293px;top:194px;width:80px;height:24px;padding-left:4px;color:#000"></div><div class="c cl" style="left:373px;top:194px;width:80px;height:24px;padding-left:4px;color:#000"></div><div class="c cl" style="left:453px;top:194px;width:80px;height:24px;padding-left:4px;color:#000"></div><div class="c cl" style="left:533px;top:194px;width:80px;height:24px;padding-left:4px;color:#000"></div><div class="c cl" style="left:613px;top:194px;width:80px;height:24px;padding-left:4px;color:#000"></div><div class="c cl" style="left:693px;top:194px;width:80px;height:24px;padding-left:4px;color:#000"></div><div class="c cl" style="left:773px;top:194px;width:80px;height:24px;padding-left:4px;color:#000"></div><div class="c cl" style="left:853px;top:194px;width:80px;height:24px;padding-left:4px;color:#000"></div><div class="c cl" style="left:933px;top:194px;width:80px;height:24px;padding-left:4px;color:#000"></div><div class="c cl" style="left:1013px;top:194px;width:80px;height:24px;padding-left:4px;color:#000"></div><div class="c cl" style="left:1093px;top:194px;width:80px;height:24px;padding-left:4px;color:#000"></div><div class="c cl" style="left:1173px;top:194px;width:80px;height:24px;padding-left:4px;color:#000"></div><div class="c cl" style="left:1253px;top:194px;width:80px;height:24px;padding-left:4px;color:#000"></div><div class="c rh" style="left:0;top:218px;width:133px;height:24px;;color:#000">Group By</div><div class="c cl" style="left:133px;top:218px;width:80px;height:24px;padding-left:4px;color:#000"></div><div class="c cl" style="left:213px;top:218px;width:80px;height:24px;padding-left:4px;color:#000"></div><div class="c cl" style="left:293px;top:218px;width:80px;height:24px;padding-left:4px;color:#000"></div><div class="c cl" style="left:373px;top:218px;width:80px;height:24px;padding-left:4px;color:#000"></div><div class="c cl" style="left:453px;top:218px;width:80px;height:24px;padding-left:4px;color:#000"></div><div class="c cl" style="left:533px;top:218px;width:80px;height:24px;padding-left:4px;color:#000"></div><div class="c cl" style="left:613px;top:218px;width:80px;height:24px;padding-left:4px;color:#000"></div><div class="c cl" style="left:693px;top:218px;width:80px;height:24px;padding-left:4px;color:#000"></div><div class="c cl" style="left:773px;top:218px;width:80px;height:24px;padding-left:4px;color:#000"></div><div class="c cl" style="left:853px;top:218px;width:80px;height:24px;padding-left:4px;color:#000"></div><div class="c cl" style="left:933px;top:218px;width:80px;height:24px;padding-left:4px;color:#000"></div><div class="c cl" style="left:1013px;top:218px;width:80px;height:24px;padding-left:4px;color:#000"></div><div class="c cl" style="left:1093px;top:218px;width:80px;height:24px;padding-left:4px;color:#000"></div><div class="c cl" style="left:1173px;top:218px;width:80px;height:24px;padding-left:4px;color:#000"></div><div class="c cl" style="left:1253px;top:218px;width:80px;height:24px;padding-left:4px;color:#000"></div><div class="c rh" style="left:0;top:242px;width:133px;height:24px;;color:#000">Filter</div><div class="c cl" style="left:133px;top:242px;width:80px;height:24px;padding-left:4px;color:#000"></div><div class="c cl" style="left:213px;top:242px;width:80px;height:24px;padding-left:4px;color:#000"></div><div class="c cl" style="left:293px;top:242px;width:80px;height:24px;padding-left:4px;color:#000"></div><div class="c cl" style="left:373px;top:242px;width:80px;height:24px;padding-left:4px;color:#000"></div><div class="c cl" style="left:453px;top:242px;width:80px;height:24px;padding-left:4px;color:#000"></div><div class="c cl" style="left:533px;top:242px;width:80px;height:24px;padding-left:4px;color:#000"></div><div class="c cl" style="left:613px;top:242px;width:80px;height:24px;padding-left:4px;color:#000"></div><div class="c cl" style="left:693px;top:242px;width:80px;height:24px;padding-left:4px;color:#000"></div><div class="c cl" style="left:773px;top:242px;width:80px;height:24px;padding-left:4px;color:#000"></div><div class="c cl" style="left:853px;top:242px;width:80px;height:24px;padding-left:4px;color:#000"></div><div class="c cl" style="left:933px;top:242px;width:80px;height:24px;padding-left:4px;color:#000"></div><div class="c cl" style="left:1013px;top:242px;width:80px;height:24px;padding-left:4px;color:#000"></div><div class="c cl" style="left:1093px;top:242px;width:80px;height:24px;padding-left:4px;color:#000"></div><div class="c cl" style="left:1173px;top:242px;width:80px;height:24px;padding-left:4px;color:#000"></div><div class="c cl" style="left:1253px;top:242px;width:80px;height:24px;padding-left:4px;color:#000"></div></div>
<div class="a" style="left:3px;top:461px;width:1289px;height:6px;background:#d6d6d6"></div>
<div class="a" style="left:1292px;top:195px;width:20px;height:271px;background:#c0c0c0;border-left:1px solid #a8a8a8;border-right:1px solid #b8b8b8"></div><div class="a" style="left:1293px;top:196px;width:18px;height:6px;background:#c8c8c8;border-top:1px solid #fff;border-left:1px solid #fff;border-bottom:1px solid #a8a8a8"></div><div class="a" style="left:1297px;top:199px;width:9px;height:1px;background:#fff"></div><div class="a" style="left:1293px;top:202px;width:18px;height:19px;background:linear-gradient(90deg,#f6f6f6 0%,#eeeeee 45%,#dcdcdc 50%,#c6c6c6 100%);border-bottom:1px solid #a8a8a8"></div><svg class="a" style="left:1296px;top:208px" width="10" height="6"><path d="M0,5.5 L4.5,0.5 L9,5.5Z" fill="#4a5678"/></svg><div class="a" style="left:1293px;top:223px;width:18px;height:222px;background:linear-gradient(90deg,#f6f6f6 0%,#eeeeee 45%,#dcdcdc 50%,#c6c6c6 100%);border-bottom:1px solid #a8a8a8"></div><svg class="a" style="left:1297px;top:329px" width="10" height="9"><g fill="#3a4a6a"><rect x="0" y="1" width="9" height="1"/><rect x="0" y="3" width="9" height="1"/><rect x="0" y="5" width="9" height="1"/><rect x="0" y="7" width="9" height="1"/></g></svg><div class="a" style="left:1293px;top:445px;width:18px;height:21px;background:linear-gradient(90deg,#f6f6f6 0%,#eeeeee 45%,#dcdcdc 50%,#c6c6c6 100%);border-top:1px solid #a8a8a8;border-bottom:1px solid #a8a8a8"></div><svg class="a" style="left:1296px;top:453px" width="10" height="6"><path d="M0,0.5 L9,0.5 L4.5,5.5Z" fill="#4a5678"/></svg>
<div class="a" style="left:3px;top:467px;width:1288px;height:20px;background:#c0c0c0;border-top:1px solid #a8a8a8;border-bottom:1px solid #808080"></div><div class="a" style="left:1291px;top:467px;width:21px;height:20px;background:#d6d6d6;border-bottom:1px solid #808080"></div><div class="a" style="left:4px;top:468px;width:5px;height:17px;background:#c8c8c8;border-left:1px solid #fff;border-top:1px solid #fff;border-right:1px solid #a8a8a8"></div><div class="a" style="left:6px;top:472px;width:1px;height:9px;background:#fff"></div><div class="a" style="left:9px;top:468px;width:21px;height:17px;background:linear-gradient(180deg,#f6f6f6 0%,#ececec 45%,#d8d8d8 50%,#c8c8c8 100%);border-left:1px solid #a8a8a8;border-right:1px solid #a8a8a8"></div><svg class="a" style="left:16px;top:471px" width="6" height="10"><path d="M5.5,0 L0.5,4.5 L5.5,9Z" fill="#4a5678"/></svg><div class="a" style="left:31px;top:468px;width:71px;height:17px;background:linear-gradient(180deg,#f6f6f6 0%,#ececec 45%,#d8d8d8 50%,#c8c8c8 100%);border-right:1px solid #a8a8a8"></div><svg class="a" style="left:62px;top:471px" width="9" height="10"><g fill="#3a4a6a"><rect x="1" y="1" width="1" height="9"/><rect x="3" y="1" width="1" height="9"/><rect x="5" y="1" width="1" height="9"/><rect x="7" y="1" width="1" height="9"/></g></svg><div class="a" style="left:1270px;top:468px;width:21px;height:17px;background:linear-gradient(180deg,#f6f6f6 0%,#ececec 45%,#d8d8d8 50%,#c8c8c8 100%);border-left:1px solid #a8a8a8;border-right:1px solid #a8a8a8"></div><svg class="a" style="left:1278px;top:471px" width="6" height="10"><path d="M0.5,0 L5.5,4.5 L0.5,9Z" fill="#4a5678"/></svg>
<div class="a" style="left:3px;top:487px;width:1309px;height:7px;background:#dedede;border-bottom:1px solid #808080"></div>
<div class="a" style="left:1292px;top:494px;width:20px;height:375px;background:#c0c0c0;border-left:1px solid #a8a8a8;border-right:1px solid #b8b8b8"></div><div class="a" style="left:1293px;top:495px;width:18px;height:6px;background:#c8c8c8;border-top:1px solid #fff;border-left:1px solid #fff;border-bottom:1px solid #a8a8a8"></div><div class="a" style="left:1297px;top:498px;width:9px;height:1px;background:#fff"></div><div class="a" style="left:1293px;top:501px;width:18px;height:19px;background:linear-gradient(90deg,#f6f6f6 0%,#eeeeee 45%,#dcdcdc 50%,#c6c6c6 100%);border-bottom:1px solid #a8a8a8"></div><svg class="a" style="left:1296px;top:507px" width="10" height="6"><path d="M0,5.5 L4.5,0.5 L9,5.5Z" fill="#4a5678"/></svg><div class="a" style="left:1293px;top:522px;width:18px;height:267px;background:linear-gradient(90deg,#f6f6f6 0%,#eeeeee 45%,#dcdcdc 50%,#c6c6c6 100%);border-bottom:1px solid #a8a8a8"></div><svg class="a" style="left:1297px;top:651px" width="10" height="9"><g fill="#3a4a6a"><rect x="0" y="1" width="9" height="1"/><rect x="0" y="3" width="9" height="1"/><rect x="0" y="5" width="9" height="1"/><rect x="0" y="7" width="9" height="1"/></g></svg><div class="a" style="left:1293px;top:848px;width:18px;height:21px;background:linear-gradient(90deg,#f6f6f6 0%,#eeeeee 45%,#dcdcdc 50%,#c6c6c6 100%);border-top:1px solid #a8a8a8;border-bottom:1px solid #a8a8a8"></div><svg class="a" style="left:1296px;top:856px" width="10" height="6"><path d="M0,0.5 L9,0.5 L4.5,5.5Z" fill="#4a5678"/></svg>
<div class="a" style="left:3px;top:870px;width:1288px;height:20px;background:#c0c0c0;border-top:1px solid #a8a8a8;border-bottom:1px solid #808080"></div><div class="a" style="left:1291px;top:870px;width:21px;height:20px;background:#d6d6d6;border-bottom:1px solid #808080"></div><div class="a" style="left:4px;top:871px;width:5px;height:17px;background:#c8c8c8;border-left:1px solid #fff;border-top:1px solid #fff;border-right:1px solid #a8a8a8"></div><div class="a" style="left:6px;top:875px;width:1px;height:9px;background:#fff"></div><div class="a" style="left:9px;top:871px;width:21px;height:17px;background:linear-gradient(180deg,#f6f6f6 0%,#ececec 45%,#d8d8d8 50%,#c8c8c8 100%);border-left:1px solid #a8a8a8;border-right:1px solid #a8a8a8"></div><svg class="a" style="left:16px;top:874px" width="6" height="10"><path d="M5.5,0 L0.5,4.5 L5.5,9Z" fill="#4a5678"/></svg><div class="a" style="left:31px;top:871px;width:1239px;height:17px;background:linear-gradient(180deg,#f6f6f6 0%,#ececec 45%,#d8d8d8 50%,#c8c8c8 100%);border-right:1px solid #a8a8a8"></div><svg class="a" style="left:646px;top:874px" width="9" height="10"><g fill="#3a4a6a"><rect x="1" y="1" width="1" height="9"/><rect x="3" y="1" width="1" height="9"/><rect x="5" y="1" width="1" height="9"/><rect x="7" y="1" width="1" height="9"/></g></svg><div class="a" style="left:1270px;top:871px;width:21px;height:17px;background:linear-gradient(180deg,#f6f6f6 0%,#ececec 45%,#d8d8d8 50%,#c8c8c8 100%);border-left:1px solid #a8a8a8;border-right:1px solid #a8a8a8"></div><svg class="a" style="left:1278px;top:874px" width="6" height="10"><path d="M0.5,0 L5.5,4.5 L0.5,9Z" fill="#4a5678"/></svg>
<div class="g" style="left:3px;top:494px;width:1289px;height:376px;background:#fff"><div class="c ch" style="left:0;top:0;width:133px;height:26px"></div><div class="c ch hb sel" style="left:133px;top:0;width:80px;height:26px;line-height:26px;padding-top:0;padding-left:5px;color:#000">Test1</div><div class="c ch hb" style="left:213px;top:0;width:80px;height:26px;line-height:26px;padding-top:0;padding-left:5px;color:#000">Test2</div><div class="c ch hb" style="left:293px;top:0;width:80px;height:26px;line-height:26px;padding-top:0;padding-left:5px;color:#000">Test3</div><div class="c ch hb" style="left:373px;top:0;width:80px;height:26px;line-height:26px;padding-top:0;padding-left:5px;color:#000">Test4</div><div class="c ch hb" style="left:453px;top:0;width:80px;height:26px;line-height:26px;padding-top:0;padding-left:5px;color:#000">Test5</div><div class="c ch hb" style="left:533px;top:0;width:80px;height:26px;line-height:26px;padding-top:0;padding-left:5px;color:#000">IQ</div><div class="c ch hb" style="left:613px;top:0;width:80px;height:26px;line-height:26px;padding-top:0;padding-left:5px;color:#000">C7</div><div class="c ch hb" style="left:693px;top:0;width:80px;height:26px;line-height:26px;padding-top:0;padding-left:5px;color:#000">C8</div><div class="c ch hb" style="left:773px;top:0;width:80px;height:26px;line-height:26px;padding-top:0;padding-left:5px;color:#000">C9</div><div class="c ch hb" style="left:853px;top:0;width:80px;height:26px;line-height:26px;padding-top:0;padding-left:5px;color:#000">C10</div><div class="c ch hb" style="left:933px;top:0;width:80px;height:26px;line-height:26px;padding-top:0;padding-left:5px;color:#000">C11</div><div class="c ch hb" style="left:1013px;top:0;width:80px;height:26px;line-height:26px;padding-top:0;padding-left:5px;color:#000">C12</div><div class="c ch hb" style="left:1093px;top:0;width:80px;height:26px;line-height:26px;padding-top:0;padding-left:5px;color:#000">C13</div><div class="c ch hb" style="left:1173px;top:0;width:80px;height:26px;line-height:26px;padding-top:0;padding-left:5px;color:#000">C14</div><div class="c ch hb" style="left:1253px;top:0;width:80px;height:26px;line-height:26px;padding-top:0;padding-left:5px;color:#000">C15</div><div class="c rh sel" style="left:0;top:26px;width:133px;height:24px;text-align:center;padding-left:0;color:#000">1</div><div class="c cl" style="left:133px;top:26px;width:80px;height:24px;text-align:right;padding-right:5px;color:#000">83</div><div class="c cl" style="left:213px;top:26px;width:80px;height:24px;text-align:right;padding-right:5px;color:#000">34</div><div class="c cl" style="left:293px;top:26px;width:80px;height:24px;text-align:right;padding-right:5px;color:#000">65</div><div class="c cl" style="left:373px;top:26px;width:80px;height:24px;text-align:right;padding-right:5px;color:#000">63</div><div class="c cl" style="left:453px;top:26px;width:80px;height:24px;text-align:right;padding-right:5px;color:#000">64</div><div class="c cl" style="left:533px;top:26px;width:80px;height:24px;text-align:right;padding-right:5px;color:#000">106</div><div class="c cl" style="left:613px;top:26px;width:80px;height:24px;text-align:right;padding-right:5px;color:#000"></div><div class="c cl" style="left:693px;top:26px;width:80px;height:24px;text-align:right;padding-right:5px;color:#000"></div><div class="c cl" style="left:773px;top:26px;width:80px;height:24px;text-align:right;padding-right:5px;color:#000"></div><div class="c cl" style="left:853px;top:26px;width:80px;height:24px;text-align:right;padding-right:5px;color:#000"></div><div class="c cl" style="left:933px;top:26px;width:80px;height:24px;text-align:right;padding-right:5px;color:#000"></div><div class="c cl" style="left:1013px;top:26px;width:80px;height:24px;text-align:right;padding-right:5px;color:#000"></div><div class="c cl" style="left:1093px;top:26px;width:80px;height:24px;text-align:right;padding-right:5px;color:#000"></div><div class="c cl" style="left:1173px;top:26px;width:80px;height:24px;text-align:right;padding-right:5px;color:#000"></div><div class="c cl" style="left:1253px;top:26px;width:80px;height:24px;text-align:right;padding-right:5px;color:#000"></div><div class="c rh" style="left:0;top:50px;width:133px;height:24px;text-align:center;padding-left:0;color:#000">2</div><div class="c cl" style="left:133px;top:50px;width:80px;height:24px;text-align:right;padding-right:5px;color:#000">73</div><div class="c cl" style="left:213px;top:50px;width:80px;height:24px;text-align:right;padding-right:5px;color:#000">19</div><div class="c cl" style="left:293px;top:50px;width:80px;height:24px;text-align:right;padding-right:5px;color:#000">73</div><div class="c cl" style="left:373px;top:50px;width:80px;height:24px;text-align:right;padding-right:5px;color:#000">48</div><div class="c cl" style="left:453px;top:50px;width:80px;height:24px;text-align:right;padding-right:5px;color:#000">82</div><div class="c cl" style="left:533px;top:50px;width:80px;height:24px;text-align:right;padding-right:5px;color:#000">92</div><div class="c cl" style="left:613px;top:50px;width:80px;height:24px;text-align:right;padding-right:5px;color:#000"></div><div class="c cl" style="left:693px;top:50px;width:80px;height:24px;text-align:right;padding-right:5px;color:#000"></div><div class="c cl" style="left:773px;top:50px;width:80px;height:24px;text-align:right;padding-right:5px;color:#000"></div><div class="c cl" style="left:853px;top:50px;width:80px;height:24px;text-align:right;padding-right:5px;color:#000"></div><div class="c cl" style="left:933px;top:50px;width:80px;height:24px;text-align:right;padding-right:5px;color:#000"></div><div class="c cl" style="left:1013px;top:50px;width:80px;height:24px;text-align:right;padding-right:5px;color:#000"></div><div class="c cl" style="left:1093px;top:50px;width:80px;height:24px;text-align:right;padding-right:5px;color:#000"></div><div class="c cl" style="left:1173px;top:50px;width:80px;height:24px;text-align:right;padding-right:5px;color:#000"></div><div class="c cl" style="left:1253px;top:50px;width:80px;height:24px;text-align:right;padding-right:5px;color:#000"></div><div class="c rh" style="left:0;top:74px;width:133px;height:24px;text-align:center;padding-left:0;color:#000">3</div><div class="c cl" style="left:133px;top:74px;width:80px;height:24px;text-align:right;padding-right:5px;color:#000">54</div><div class="c cl" style="left:213px;top:74px;width:80px;height:24px;text-align:right;padding-right:5px;color:#000">81</div><div class="c cl" style="left:293px;top:74px;width:80px;height:24px;text-align:right;padding-right:5px;color:#000">82</div><div class="c cl" style="left:373px;top:74px;width:80px;height:24px;text-align:right;padding-right:5px;color:#000">65</div><div class="c cl" style="left:453px;top:74px;width:80px;height:24px;text-align:right;padding-right:5px;color:#000">73</div><div class="c cl" style="left:533px;top:74px;width:80px;height:24px;text-align:right;padding-right:5px;color:#000">102</div><div class="c cl" style="left:613px;top:74px;width:80px;height:24px;text-align:right;padding-right:5px;color:#000"></div><div class="c cl" style="left:693px;top:74px;width:80px;height:24px;text-align:right;padding-right:5px;color:#000"></div><div class="c cl" style="left:773px;top:74px;width:80px;height:24px;text-align:right;padding-right:5px;color:#000"></div><div class="c cl" style="left:853px;top:74px;width:80px;height:24px;text-align:right;padding-right:5px;color:#000"></div><div class="c cl" style="left:933px;top:74px;width:80px;height:24px;text-align:right;padding-right:5px;color:#000"></div><div class="c cl" style="left:1013px;top:74px;width:80px;height:24px;text-align:right;padding-right:5px;color:#000"></div><div class="c cl" style="left:1093px;top:74px;width:80px;height:24px;text-align:right;padding-right:5px;color:#000"></div><div class="c cl" style="left:1173px;top:74px;width:80px;height:24px;text-align:right;padding-right:5px;color:#000"></div><div class="c cl" style="left:1253px;top:74px;width:80px;height:24px;text-align:right;padding-right:5px;color:#000"></div><div class="c rh" style="left:0;top:98px;width:133px;height:24px;text-align:center;padding-left:0;color:#000">4</div><div class="c cl" style="left:133px;top:98px;width:80px;height:24px;text-align:right;padding-right:5px;color:#000">96</div><div class="c cl" style="left:213px;top:98px;width:80px;height:24px;text-align:right;padding-right:5px;color:#000">72</div><div class="c cl" style="left:293px;top:98px;width:80px;height:24px;text-align:right;padding-right:5px;color:#000">91</div><div class="c cl" style="left:373px;top:98px;width:80px;height:24px;text-align:right;padding-right:5px;color:#000">88</div><div class="c cl" style="left:453px;top:98px;width:80px;height:24px;text-align:right;padding-right:5px;color:#000">94</div><div class="c cl" style="left:533px;top:98px;width:80px;height:24px;text-align:right;padding-right:5px;color:#000">121</div><div class="c cl" style="left:613px;top:98px;width:80px;height:24px;text-align:right;padding-right:5px;color:#000"></div><div class="c cl" style="left:693px;top:98px;width:80px;height:24px;text-align:right;padding-right:5px;color:#000"></div><div class="c cl" style="left:773px;top:98px;width:80px;height:24px;text-align:right;padding-right:5px;color:#000"></div><div class="c cl" style="left:853px;top:98px;width:80px;height:24px;text-align:right;padding-right:5px;color:#000"></div><div class="c cl" style="left:933px;top:98px;width:80px;height:24px;text-align:right;padding-right:5px;color:#000"></div><div class="c cl" style="left:1013px;top:98px;width:80px;height:24px;text-align:right;padding-right:5px;color:#000"></div><div class="c cl" style="left:1093px;top:98px;width:80px;height:24px;text-align:right;padding-right:5px;color:#000"></div><div class="c cl" style="left:1173px;top:98px;width:80px;height:24px;text-align:right;padding-right:5px;color:#000"></div><div class="c cl" style="left:1253px;top:98px;width:80px;height:24px;text-align:right;padding-right:5px;color:#000"></div><div class="c rh" style="left:0;top:122px;width:133px;height:24px;text-align:center;padding-left:0;color:#000">5</div><div class="c cl" style="left:133px;top:122px;width:80px;height:24px;text-align:right;padding-right:5px;color:#000">84</div><div class="c cl" style="left:213px;top:122px;width:80px;height:24px;text-align:right;padding-right:5px;color:#000">53</div><div class="c cl" style="left:293px;top:122px;width:80px;height:24px;text-align:right;padding-right:5px;color:#000">72</div><div class="c cl" style="left:373px;top:122px;width:80px;height:24px;text-align:right;padding-right:5px;color:#000">68</div><div class="c cl" style="left:453px;top:122px;width:80px;height:24px;text-align:right;padding-right:5px;color:#000">82</div><div class="c cl" style="left:533px;top:122px;width:80px;height:24px;text-align:right;padding-right:5px;color:#000">102</div><div class="c cl" style="left:613px;top:122px;width:80px;height:24px;text-align:right;padding-right:5px;color:#000"></div><div class="c cl" style="left:693px;top:122px;width:80px;height:24px;text-align:right;padding-right:5px;color:#000"></div><div class="c cl" style="left:773px;top:122px;width:80px;height:24px;text-align:right;padding-right:5px;color:#000"></div><div class="c cl" style="left:853px;top:122px;width:80px;height:24px;text-align:right;padding-right:5px;color:#000"></div><div class="c cl" style="left:933px;top:122px;width:80px;height:24px;text-align:right;padding-right:5px;color:#000"></div><div class="c cl" style="left:1013px;top:122px;width:80px;height:24px;text-align:right;padding-right:5px;color:#000"></div><div class="c cl" style="left:1093px;top:122px;width:80px;height:24px;text-align:right;padding-right:5px;color:#000"></div><div class="c cl" style="left:1173px;top:122px;width:80px;height:24px;text-align:right;padding-right:5px;color:#000"></div><div class="c cl" style="left:1253px;top:122px;width:80px;height:24px;text-align:right;padding-right:5px;color:#000"></div><div class="c rh" style="left:0;top:146px;width:133px;height:24px;text-align:center;padding-left:0;color:#000">6</div><div class="c cl" style="left:133px;top:146px;width:80px;height:24px;text-align:right;padding-right:5px;color:#000">86</div><div class="c cl" style="left:213px;top:146px;width:80px;height:24px;text-align:right;padding-right:5px;color:#000">72</div><div class="c cl" style="left:293px;top:146px;width:80px;height:24px;text-align:right;padding-right:5px;color:#000">63</div><div class="c cl" style="left:373px;top:146px;width:80px;height:24px;text-align:right;padding-right:5px;color:#000">79</div><div class="c cl" style="left:453px;top:146px;width:80px;height:24px;text-align:right;padding-right:5px;color:#000">57</div><div class="c cl" style="left:533px;top:146px;width:80px;height:24px;text-align:right;padding-right:5px;color:#000">105</div><div class="c cl" style="left:613px;top:146px;width:80px;height:24px;text-align:right;padding-right:5px;color:#000"></div><div class="c cl" style="left:693px;top:146px;width:80px;height:24px;text-align:right;padding-right:5px;color:#000"></div><div class="c cl" style="left:773px;top:146px;width:80px;height:24px;text-align:right;padding-right:5px;color:#000"></div><div class="c cl" style="left:853px;top:146px;width:80px;height:24px;text-align:right;padding-right:5px;color:#000"></div><div class="c cl" style="left:933px;top:146px;width:80px;height:24px;text-align:right;padding-right:5px;color:#000"></div><div class="c cl" style="left:1013px;top:146px;width:80px;height:24px;text-align:right;padding-right:5px;color:#000"></div><div class="c cl" style="left:1093px;top:146px;width:80px;height:24px;text-align:right;padding-right:5px;color:#000"></div><div class="c cl" style="left:1173px;top:146px;width:80px;height:24px;text-align:right;padding-right:5px;color:#000"></div><div class="c cl" style="left:1253px;top:146px;width:80px;height:24px;text-align:right;padding-right:5px;color:#000"></div><div class="c rh" style="left:0;top:170px;width:133px;height:24px;text-align:center;padding-left:0;color:#000">7</div><div class="c cl" style="left:133px;top:170px;width:80px;height:24px;text-align:right;padding-right:5px;color:#000">76</div><div class="c cl" style="left:213px;top:170px;width:80px;height:24px;text-align:right;padding-right:5px;color:#000">62</div><div class="c cl" style="left:293px;top:170px;width:80px;height:24px;text-align:right;padding-right:5px;color:#000">64</div><div class="c cl" style="left:373px;top:170px;width:80px;height:24px;text-align:right;padding-right:5px;color:#000">69</div><div class="c cl" style="left:453px;top:170px;width:80px;height:24px;text-align:right;padding-right:5px;color:#000">64</div><div class="c cl" style="left:533px;top:170px;width:80px;height:24px;text-align:right;padding-right:5px;color:#000">97</div><div class="c cl" style="left:613px;top:170px;width:80px;height:24px;text-align:right;padding-right:5px;color:#000"></div><div class="c cl" style="left:693px;top:170px;width:80px;height:24px;text-align:right;padding-right:5px;color:#000"></div><div class="c cl" style="left:773px;top:170px;width:80px;height:24px;text-align:right;padding-right:5px;color:#000"></div><div class="c cl" style="left:853px;top:170px;width:80px;height:24px;text-align:right;padding-right:5px;color:#000"></div><div class="c cl" style="left:933px;top:170px;width:80px;height:24px;text-align:right;padding-right:5px;color:#000"></div><div class="c cl" style="left:1013px;top:170px;width:80px;height:24px;text-align:right;padding-right:5px;color:#000"></div><div class="c cl" style="left:1093px;top:170px;width:80px;height:24px;text-align:right;padding-right:5px;color:#000"></div><div class="c cl" style="left:1173px;top:170px;width:80px;height:24px;text-align:right;padding-right:5px;color:#000"></div><div class="c cl" style="left:1253px;top:170px;width:80px;height:24px;text-align:right;padding-right:5px;color:#000"></div><div class="c rh" style="left:0;top:194px;width:133px;height:24px;text-align:center;padding-left:0;color:#000">8</div><div class="c cl" style="left:133px;top:194px;width:80px;height:24px;text-align:right;padding-right:5px;color:#000">54</div><div class="c cl" style="left:213px;top:194px;width:80px;height:24px;text-align:right;padding-right:5px;color:#000">49</div><div class="c cl" style="left:293px;top:194px;width:80px;height:24px;text-align:right;padding-right:5px;color:#000">43</div><div class="c cl" style="left:373px;top:194px;width:80px;height:24px;text-align:right;padding-right:5px;color:#000">52</div><div class="c cl" style="left:453px;top:194px;width:80px;height:24px;text-align:right;padding-right:5px;color:#000">84</div><div class="c cl" style="left:533px;top:194px;width:80px;height:24px;text-align:right;padding-right:5px;color:#000">92</div><div class="c cl" style="left:613px;top:194px;width:80px;height:24px;text-align:right;padding-right:5px;color:#000"></div><div class="c cl" style="left:693px;top:194px;width:80px;height:24px;text-align:right;padding-right:5px;color:#000"></div><div class="c cl" style="left:773px;top:194px;width:80px;height:24px;text-align:right;padding-right:5px;color:#000"></div><div class="c cl" style="left:853px;top:194px;width:80px;height:24px;text-align:right;padding-right:5px;color:#000"></div><div class="c cl" style="left:933px;top:194px;width:80px;height:24px;text-align:right;padding-right:5px;color:#000"></div><div class="c cl" style="left:1013px;top:194px;width:80px;height:24px;text-align:right;padding-right:5px;color:#000"></div><div class="c cl" style="left:1093px;top:194px;width:80px;height:24px;text-align:right;padding-right:5px;color:#000"></div><div class="c cl" style="left:1173px;top:194px;width:80px;height:24px;text-align:right;padding-right:5px;color:#000"></div><div class="c cl" style="left:1253px;top:194px;width:80px;height:24px;text-align:right;padding-right:5px;color:#000"></div><div class="c rh" style="left:0;top:218px;width:133px;height:24px;text-align:center;padding-left:0;color:#000">9</div><div class="c cl" style="left:133px;top:218px;width:80px;height:24px;text-align:right;padding-right:5px;color:#000">37</div><div class="c cl" style="left:213px;top:218px;width:80px;height:24px;text-align:right;padding-right:5px;color:#000">43</div><div class="c cl" style="left:293px;top:218px;width:80px;height:24px;text-align:right;padding-right:5px;color:#000">92</div><div class="c cl" style="left:373px;top:218px;width:80px;height:24px;text-align:right;padding-right:5px;color:#000">39</div><div class="c cl" style="left:453px;top:218px;width:80px;height:24px;text-align:right;padding-right:5px;color:#000">72</div><div class="c cl" style="left:533px;top:218px;width:80px;height:24px;text-align:right;padding-right:5px;color:#000">94</div><div class="c cl" style="left:613px;top:218px;width:80px;height:24px;text-align:right;padding-right:5px;color:#000"></div><div class="c cl" style="left:693px;top:218px;width:80px;height:24px;text-align:right;padding-right:5px;color:#000"></div><div class="c cl" style="left:773px;top:218px;width:80px;height:24px;text-align:right;padding-right:5px;color:#000"></div><div class="c cl" style="left:853px;top:218px;width:80px;height:24px;text-align:right;padding-right:5px;color:#000"></div><div class="c cl" style="left:933px;top:218px;width:80px;height:24px;text-align:right;padding-right:5px;color:#000"></div><div class="c cl" style="left:1013px;top:218px;width:80px;height:24px;text-align:right;padding-right:5px;color:#000"></div><div class="c cl" style="left:1093px;top:218px;width:80px;height:24px;text-align:right;padding-right:5px;color:#000"></div><div class="c cl" style="left:1173px;top:218px;width:80px;height:24px;text-align:right;padding-right:5px;color:#000"></div><div class="c cl" style="left:1253px;top:218px;width:80px;height:24px;text-align:right;padding-right:5px;color:#000"></div><div class="c rh" style="left:0;top:242px;width:133px;height:24px;text-align:center;padding-left:0;color:#000">10</div><div class="c cl" style="left:133px;top:242px;width:80px;height:24px;text-align:right;padding-right:5px;color:#000">42</div><div class="c cl" style="left:213px;top:242px;width:80px;height:24px;text-align:right;padding-right:5px;color:#000">54</div><div class="c cl" style="left:293px;top:242px;width:80px;height:24px;text-align:right;padding-right:5px;color:#000">96</div><div class="c cl" style="left:373px;top:242px;width:80px;height:24px;text-align:right;padding-right:5px;color:#000">48</div><div class="c cl" style="left:453px;top:242px;width:80px;height:24px;text-align:right;padding-right:5px;color:#000">83</div><div class="c cl" style="left:533px;top:242px;width:80px;height:24px;text-align:right;padding-right:5px;color:#000">112</div><div class="c cl" style="left:613px;top:242px;width:80px;height:24px;text-align:right;padding-right:5px;color:#000"></div><div class="c cl" style="left:693px;top:242px;width:80px;height:24px;text-align:right;padding-right:5px;color:#000"></div><div class="c cl" style="left:773px;top:242px;width:80px;height:24px;text-align:right;padding-right:5px;color:#000"></div><div class="c cl" style="left:853px;top:242px;width:80px;height:24px;text-align:right;padding-right:5px;color:#000"></div><div class="c cl" style="left:933px;top:242px;width:80px;height:24px;text-align:right;padding-right:5px;color:#000"></div><div class="c cl" style="left:1013px;top:242px;width:80px;height:24px;text-align:right;padding-right:5px;color:#000"></div><div class="c cl" style="left:1093px;top:242px;width:80px;height:24px;text-align:right;padding-right:5px;color:#000"></div><div class="c cl" style="left:1173px;top:242px;width:80px;height:24px;text-align:right;padding-right:5px;color:#000"></div><div class="c cl" style="left:1253px;top:242px;width:80px;height:24px;text-align:right;padding-right:5px;color:#000"></div><div class="c rh" style="left:0;top:266px;width:133px;height:24px;text-align:center;padding-left:0;color:#000">11</div><div class="c cl" style="left:133px;top:266px;width:80px;height:24px;text-align:right;padding-right:5px;color:#000">71</div><div class="c cl" style="left:213px;top:266px;width:80px;height:24px;text-align:right;padding-right:5px;color:#000">63</div><div class="c cl" style="left:293px;top:266px;width:80px;height:24px;text-align:right;padding-right:5px;color:#000">52</div><div class="c cl" style="left:373px;top:266px;width:80px;height:24px;text-align:right;padding-right:5px;color:#000">69</div><div class="c cl" style="left:453px;top:266px;width:80px;height:24px;text-align:right;padding-right:5px;color:#000">42</div><div class="c cl" style="left:533px;top:266px;width:80px;height:24px;text-align:right;padding-right:5px;color:#000">130</div><div class="c cl" style="left:613px;top:266px;width:80px;height:24px;text-align:right;padding-right:5px;color:#000"></div><div class="c cl" style="left:693px;top:266px;width:80px;height:24px;text-align:right;padding-right:5px;color:#000"></div><div class="c cl" style="left:773px;top:266px;width:80px;height:24px;text-align:right;padding-right:5px;color:#000"></div><div class="c cl" style="left:853px;top:266px;width:80px;height:24px;text-align:right;padding-right:5px;color:#000"></div><div class="c cl" style="left:933px;top:266px;width:80px;height:24px;text-align:right;padding-right:5px;color:#000"></div><div class="c cl" style="left:1013px;top:266px;width:80px;height:24px;text-align:right;padding-right:5px;color:#000"></div><div class="c cl" style="left:1093px;top:266px;width:80px;height:24px;text-align:right;padding-right:5px;color:#000"></div><div class="c cl" style="left:1173px;top:266px;width:80px;height:24px;text-align:right;padding-right:5px;color:#000"></div><div class="c cl" style="left:1253px;top:266px;width:80px;height:24px;text-align:right;padding-right:5px;color:#000"></div><div class="c rh" style="left:0;top:290px;width:133px;height:24px;text-align:center;padding-left:0;color:#000">12</div><div class="c cl" style="left:133px;top:290px;width:80px;height:24px;text-align:right;padding-right:5px;color:#000">63</div><div class="c cl" style="left:213px;top:290px;width:80px;height:24px;text-align:right;padding-right:5px;color:#000">74</div><div class="c cl" style="left:293px;top:290px;width:80px;height:24px;text-align:right;padding-right:5px;color:#000">74</div><div class="c cl" style="left:373px;top:290px;width:80px;height:24px;text-align:right;padding-right:5px;color:#000">71</div><div class="c cl" style="left:453px;top:290px;width:80px;height:24px;text-align:right;padding-right:5px;color:#000">91</div><div class="c cl" style="left:533px;top:290px;width:80px;height:24px;text-align:right;padding-right:5px;color:#000">115</div><div class="c cl" style="left:613px;top:290px;width:80px;height:24px;text-align:right;padding-right:5px;color:#000"></div><div class="c cl" style="left:693px;top:290px;width:80px;height:24px;text-align:right;padding-right:5px;color:#000"></div><div class="c cl" style="left:773px;top:290px;width:80px;height:24px;text-align:right;padding-right:5px;color:#000"></div><div class="c cl" style="left:853px;top:290px;width:80px;height:24px;text-align:right;padding-right:5px;color:#000"></div><div class="c cl" style="left:933px;top:290px;width:80px;height:24px;text-align:right;padding-right:5px;color:#000"></div><div class="c cl" style="left:1013px;top:290px;width:80px;height:24px;text-align:right;padding-right:5px;color:#000"></div><div class="c cl" style="left:1093px;top:290px;width:80px;height:24px;text-align:right;padding-right:5px;color:#000"></div><div class="c cl" style="left:1173px;top:290px;width:80px;height:24px;text-align:right;padding-right:5px;color:#000"></div><div class="c cl" style="left:1253px;top:290px;width:80px;height:24px;text-align:right;padding-right:5px;color:#000"></div><div class="c rh" style="left:0;top:314px;width:133px;height:24px;text-align:center;padding-left:0;color:#000">13</div><div class="c cl" style="left:133px;top:314px;width:80px;height:24px;text-align:right;padding-right:5px;color:#000">69</div><div class="c cl" style="left:213px;top:314px;width:80px;height:24px;text-align:right;padding-right:5px;color:#000">81</div><div class="c cl" style="left:293px;top:314px;width:80px;height:24px;text-align:right;padding-right:5px;color:#000">82</div><div class="c cl" style="left:373px;top:314px;width:80px;height:24px;text-align:right;padding-right:5px;color:#000">75</div><div class="c cl" style="left:453px;top:314px;width:80px;height:24px;text-align:right;padding-right:5px;color:#000">54</div><div class="c cl" style="left:533px;top:314px;width:80px;height:24px;text-align:right;padding-right:5px;color:#000">98</div><div class="c cl" style="left:613px;top:314px;width:80px;height:24px;text-align:right;padding-right:5px;color:#000"></div><div class="c cl" style="left:693px;top:314px;width:80px;height:24px;text-align:right;padding-right:5px;color:#000"></div><div class="c cl" style="left:773px;top:314px;width:80px;height:24px;text-align:right;padding-right:5px;color:#000"></div><div class="c cl" style="left:853px;top:314px;width:80px;height:24px;text-align:right;padding-right:5px;color:#000"></div><div class="c cl" style="left:933px;top:314px;width:80px;height:24px;text-align:right;padding-right:5px;color:#000"></div><div class="c cl" style="left:1013px;top:314px;width:80px;height:24px;text-align:right;padding-right:5px;color:#000"></div><div class="c cl" style="left:1093px;top:314px;width:80px;height:24px;text-align:right;padding-right:5px;color:#000"></div><div class="c cl" style="left:1173px;top:314px;width:80px;height:24px;text-align:right;padding-right:5px;color:#000"></div><div class="c cl" style="left:1253px;top:314px;width:80px;height:24px;text-align:right;padding-right:5px;color:#000"></div><div class="c rh" style="left:0;top:338px;width:133px;height:24px;text-align:center;padding-left:0;color:#000">14</div><div class="c cl" style="left:133px;top:338px;width:80px;height:24px;text-align:right;padding-right:5px;color:#000">81</div><div class="c cl" style="left:213px;top:338px;width:80px;height:24px;text-align:right;padding-right:5px;color:#000">89</div><div class="c cl" style="left:293px;top:338px;width:80px;height:24px;text-align:right;padding-right:5px;color:#000">64</div><div class="c cl" style="left:373px;top:338px;width:80px;height:24px;text-align:right;padding-right:5px;color:#000">85</div><div class="c cl" style="left:453px;top:338px;width:80px;height:24px;text-align:right;padding-right:5px;color:#000">62</div><div class="c cl" style="left:533px;top:338px;width:80px;height:24px;text-align:right;padding-right:5px;color:#000">96</div><div class="c cl" style="left:613px;top:338px;width:80px;height:24px;text-align:right;padding-right:5px;color:#000"></div><div class="c cl" style="left:693px;top:338px;width:80px;height:24px;text-align:right;padding-right:5px;color:#000"></div><div class="c cl" style="left:773px;top:338px;width:80px;height:24px;text-align:right;padding-right:5px;color:#000"></div><div class="c cl" style="left:853px;top:338px;width:80px;height:24px;text-align:right;padding-right:5px;color:#000"></div><div class="c cl" style="left:933px;top:338px;width:80px;height:24px;text-align:right;padding-right:5px;color:#000"></div><div class="c cl" style="left:1013px;top:338px;width:80px;height:24px;text-align:right;padding-right:5px;color:#000"></div><div class="c cl" style="left:1093px;top:338px;width:80px;height:24px;text-align:right;padding-right:5px;color:#000"></div><div class="c cl" style="left:1173px;top:338px;width:80px;height:24px;text-align:right;padding-right:5px;color:#000"></div><div class="c cl" style="left:1253px;top:338px;width:80px;height:24px;text-align:right;padding-right:5px;color:#000"></div><div class="c rh" style="left:0;top:362px;width:133px;height:24px;text-align:center;padding-left:0;color:#000">15</div><div class="c cl" style="left:133px;top:362px;width:80px;height:24px;text-align:right;padding-right:5px;color:#000">50</div><div class="c cl" style="left:213px;top:362px;width:80px;height:24px;text-align:right;padding-right:5px;color:#000">75</div><div class="c cl" style="left:293px;top:362px;width:80px;height:24px;text-align:right;padding-right:5px;color:#000">72</div><div class="c cl" style="left:373px;top:362px;width:80px;height:24px;text-align:right;padding-right:5px;color:#000">64</div><div class="c cl" style="left:453px;top:362px;width:80px;height:24px;text-align:right;padding-right:5px;color:#000">45</div><div class="c cl" style="left:533px;top:362px;width:80px;height:24px;text-align:right;padding-right:5px;color:#000">103</div><div class="c cl" style="left:613px;top:362px;width:80px;height:24px;text-align:right;padding-right:5px;color:#000"></div><div class="c cl" style="left:693px;top:362px;width:80px;height:24px;text-align:right;padding-right:5px;color:#000"></div><div class="c cl" style="left:773px;top:362px;width:80px;height:24px;text-align:right;padding-right:5px;color:#000"></div><div class="c cl" style="left:853px;top:362px;width:80px;height:24px;text-align:right;padding-right:5px;color:#000"></div><div class="c cl" style="left:933px;top:362px;width:80px;height:24px;text-align:right;padding-right:5px;color:#000"></div><div class="c cl" style="left:1013px;top:362px;width:80px;height:24px;text-align:right;padding-right:5px;color:#000"></div><div class="c cl" style="left:1093px;top:362px;width:80px;height:24px;text-align:right;padding-right:5px;color:#000"></div><div class="c cl" style="left:1173px;top:362px;width:80px;height:24px;text-align:right;padding-right:5px;color:#000"></div><div class="c cl" style="left:1253px;top:362px;width:80px;height:24px;text-align:right;padding-right:5px;color:#000"></div></div>
<div class="a" style="left:3px;top:869px;width:1289px;height:1px;background:#dadada"></div>
<div class="a" style="left:3px;top:890px;width:1309px;height:7px;background:#dedede;border-bottom:1px solid #808080"></div>
<div class="a" style="left:3px;top:897px;width:1309px;height:36px;background:#c8c8c8"></div>
<div class="a" style="left:7px;top:898px;width:1301px;height:35px;background:#3f79bf;border:1px solid #7a7a78;border-bottom:none;border-radius:4px 4px 0 0"></div>
<div class="t" style="left:18px;top:908px;font-size:15.5px;font-weight:bold;color:#fff">Summary Statistics</div>
<svg class="a" style="left:176px;top:906px" width="21" height="21" viewBox="0 0 21 21"><circle cx="10" cy="10" r="8.5" fill="#fff"/><path d="M5.5,6.8 L10,10 L14.5,6.8 M5.5,10.8 L10,14 L14.5,10.8" fill="none" stroke="#4a6a98" stroke-width="1.7"/></svg>
<div class="t" style="left:1153px;top:909px;font-size:14.5px;color:#fff">Statistics &amp; Formatting</div>
<div class="a" style="left:1292px;top:933px;width:20px;height:142px;background:#c0c0c0;border-left:1px solid #a8a8a8;border-right:1px solid #b8b8b8"></div><div class="a" style="left:1293px;top:934px;width:18px;height:6px;background:#c8c8c8;border-top:1px solid #fff;border-left:1px solid #fff;border-bottom:1px solid #a8a8a8"></div><div class="a" style="left:1297px;top:937px;width:9px;height:1px;background:#fff"></div><div class="a" style="left:1293px;top:939px;width:18px;height:19px;background:linear-gradient(90deg,#f6f6f6 0%,#eeeeee 45%,#dcdcdc 50%,#c6c6c6 100%);border-bottom:1px solid #a8a8a8"></div><svg class="a" style="left:1296px;top:945px" width="10" height="6"><path d="M0,5.5 L4.5,0.5 L9,5.5Z" fill="#4a5678"/></svg><div class="a" style="left:1293px;top:960px;width:18px;height:75px;background:linear-gradient(90deg,#f6f6f6 0%,#eeeeee 45%,#dcdcdc 50%,#c6c6c6 100%);border-bottom:1px solid #a8a8a8"></div><svg class="a" style="left:1297px;top:993px" width="10" height="9"><g fill="#3a4a6a"><rect x="0" y="1" width="9" height="1"/><rect x="0" y="3" width="9" height="1"/><rect x="0" y="5" width="9" height="1"/><rect x="0" y="7" width="9" height="1"/></g></svg><div class="a" style="left:1293px;top:1054px;width:18px;height:21px;background:linear-gradient(90deg,#f6f6f6 0%,#eeeeee 45%,#dcdcdc 50%,#c6c6c6 100%);border-top:1px solid #a8a8a8;border-bottom:1px solid #a8a8a8"></div><svg class="a" style="left:1296px;top:1062px" width="10" height="6"><path d="M0,0.5 L9,0.5 L4.5,5.5Z" fill="#4a5678"/></svg>
<div class="a" style="left:3px;top:1076px;width:1288px;height:21px;background:#c0c0c0;border-top:1px solid #a8a8a8;border-bottom:1px solid #808080"></div><div class="a" style="left:1291px;top:1076px;width:21px;height:21px;background:#d6d6d6;border-bottom:1px solid #808080"></div><div class="a" style="left:4px;top:1077px;width:5px;height:17px;background:#c8c8c8;border-left:1px solid #fff;border-top:1px solid #fff;border-right:1px solid #a8a8a8"></div><div class="a" style="left:6px;top:1081px;width:1px;height:9px;background:#fff"></div><div class="a" style="left:9px;top:1077px;width:21px;height:17px;background:linear-gradient(180deg,#f6f6f6 0%,#ececec 45%,#d8d8d8 50%,#c8c8c8 100%);border-left:1px solid #a8a8a8;border-right:1px solid #a8a8a8"></div><svg class="a" style="left:16px;top:1080px" width="6" height="10"><path d="M5.5,0 L0.5,4.5 L5.5,9Z" fill="#4a5678"/></svg><div class="a" style="left:31px;top:1077px;width:1239px;height:17px;background:linear-gradient(180deg,#f6f6f6 0%,#ececec 45%,#d8d8d8 50%,#c8c8c8 100%);border-right:1px solid #a8a8a8"></div><svg class="a" style="left:646px;top:1080px" width="9" height="10"><g fill="#3a4a6a"><rect x="1" y="1" width="1" height="9"/><rect x="3" y="1" width="1" height="9"/><rect x="5" y="1" width="1" height="9"/><rect x="7" y="1" width="1" height="9"/></g></svg><div class="a" style="left:1270px;top:1077px;width:21px;height:17px;background:linear-gradient(180deg,#f6f6f6 0%,#ececec 45%,#d8d8d8 50%,#c8c8c8 100%);border-left:1px solid #a8a8a8;border-right:1px solid #a8a8a8"></div><svg class="a" style="left:1278px;top:1080px" width="6" height="10"><path d="M0.5,0 L5.5,4.5 L0.5,9Z" fill="#4a5678"/></svg>
<div class="g" style="left:3px;top:933px;width:1289px;height:143px;background:#edf0f8"><div class="c ch" style="left:0;top:0;width:133px;height:26px"></div><div class="c ch hb" style="left:133px;top:0;width:80px;height:26px;line-height:26px;padding-top:0;padding-left:5px;color:#000064">Test1</div><div class="c ch hb" style="left:213px;top:0;width:80px;height:26px;line-height:26px;padding-top:0;padding-left:5px;color:#000064">Test2</div><div class="c ch hb" style="left:293px;top:0;width:80px;height:26px;line-height:26px;padding-top:0;padding-left:5px;color:#000064">Test3</div><div class="c ch hb" style="left:373px;top:0;width:80px;height:26px;line-height:26px;padding-top:0;padding-left:5px;color:#000064">Test4</div><div class="c ch hb" style="left:453px;top:0;width:80px;height:26px;line-height:26px;padding-top:0;padding-left:5px;color:#000064">Test5</div><div class="c ch hb" style="left:533px;top:0;width:80px;height:26px;line-height:26px;padding-top:0;padding-left:5px;color:#000064">IQ</div><div class="c ch hb" style="left:613px;top:0;width:80px;height:26px;line-height:26px;padding-top:0;padding-left:5px;color:#000064">C7</div><div class="c ch hb" style="left:693px;top:0;width:80px;height:26px;line-height:26px;padding-top:0;padding-left:5px;color:#000064">C8</div><div class="c ch hb" style="left:773px;top:0;width:80px;height:26px;line-height:26px;padding-top:0;padding-left:5px;color:#000064">C9</div><div class="c ch hb" style="left:853px;top:0;width:80px;height:26px;line-height:26px;padding-top:0;padding-left:5px;color:#000064">C10</div><div class="c ch hb" style="left:933px;top:0;width:80px;height:26px;line-height:26px;padding-top:0;padding-left:5px;color:#000064">C11</div><div class="c ch hb" style="left:1013px;top:0;width:80px;height:26px;line-height:26px;padding-top:0;padding-left:5px;color:#000064">C12</div><div class="c ch hb" style="left:1093px;top:0;width:80px;height:26px;line-height:26px;padding-top:0;padding-left:5px;color:#000064">C13</div><div class="c ch hb" style="left:1173px;top:0;width:80px;height:26px;line-height:26px;padding-top:0;padding-left:5px;color:#000064">C14</div><div class="c ch hb" style="left:1253px;top:0;width:80px;height:26px;line-height:26px;padding-top:0;padding-left:5px;color:#000064">C15</div><div class="c rh" style="left:0;top:26px;width:133px;height:24px;;color:#0a0a5a">Cells with Data</div><div class="c cl" style="left:133px;top:26px;width:80px;height:24px;text-align:right;padding-right:5px;color:#0a0a5a">17</div><div class="c cl" style="left:213px;top:26px;width:80px;height:24px;text-align:right;padding-right:5px;color:#0a0a5a">17</div><div class="c cl" style="left:293px;top:26px;width:80px;height:24px;text-align:right;padding-right:5px;color:#0a0a5a">17</div><div class="c cl" style="left:373px;top:26px;width:80px;height:24px;text-align:right;padding-right:5px;color:#0a0a5a">17</div><div class="c cl" style="left:453px;top:26px;width:80px;height:24px;text-align:right;padding-right:5px;color:#0a0a5a">17</div><div class="c cl" style="left:533px;top:26px;width:80px;height:24px;text-align:right;padding-right:5px;color:#0a0a5a">15</div><div class="c cl" style="left:613px;top:26px;width:80px;height:24px;text-align:right;padding-right:5px;color:#0a0a5a"></div><div class="c cl" style="left:693px;top:26px;width:80px;height:24px;text-align:right;padding-right:5px;color:#0a0a5a"></div><div class="c cl" style="left:773px;top:26px;width:80px;height:24px;text-align:right;padding-right:5px;color:#0a0a5a"></div><div class="c cl" style="left:853px;top:26px;width:80px;height:24px;text-align:right;padding-right:5px;color:#0a0a5a"></div><div class="c cl" style="left:933px;top:26px;width:80px;height:24px;text-align:right;padding-right:5px;color:#0a0a5a"></div><div class="c cl" style="left:1013px;top:26px;width:80px;height:24px;text-align:right;padding-right:5px;color:#0a0a5a"></div><div class="c cl" style="left:1093px;top:26px;width:80px;height:24px;text-align:right;padding-right:5px;color:#0a0a5a"></div><div class="c cl" style="left:1173px;top:26px;width:80px;height:24px;text-align:right;padding-right:5px;color:#0a0a5a"></div><div class="c cl" style="left:1253px;top:26px;width:80px;height:24px;text-align:right;padding-right:5px;color:#0a0a5a"></div><div class="c rh" style="left:0;top:50px;width:133px;height:24px;;color:#0a0a5a">Unique Values</div><div class="c cl" style="left:133px;top:50px;width:80px;height:24px;text-align:right;padding-right:5px;color:#0a0a5a">15</div><div class="c cl" style="left:213px;top:50px;width:80px;height:24px;text-align:right;padding-right:5px;color:#0a0a5a">15</div><div class="c cl" style="left:293px;top:50px;width:80px;height:24px;text-align:right;padding-right:5px;color:#0a0a5a">14</div><div class="c cl" style="left:373px;top:50px;width:80px;height:24px;text-align:right;padding-right:5px;color:#0a0a5a">15</div><div class="c cl" style="left:453px;top:50px;width:80px;height:24px;text-align:right;padding-right:5px;color:#0a0a5a">15</div><div class="c cl" style="left:533px;top:50px;width:80px;height:24px;text-align:right;padding-right:5px;color:#0a0a5a">13</div><div class="c cl" style="left:613px;top:50px;width:80px;height:24px;text-align:right;padding-right:5px;color:#0a0a5a"></div><div class="c cl" style="left:693px;top:50px;width:80px;height:24px;text-align:right;padding-right:5px;color:#0a0a5a"></div><div class="c cl" style="left:773px;top:50px;width:80px;height:24px;text-align:right;padding-right:5px;color:#0a0a5a"></div><div class="c cl" style="left:853px;top:50px;width:80px;height:24px;text-align:right;padding-right:5px;color:#0a0a5a"></div><div class="c cl" style="left:933px;top:50px;width:80px;height:24px;text-align:right;padding-right:5px;color:#0a0a5a"></div><div class="c cl" style="left:1013px;top:50px;width:80px;height:24px;text-align:right;padding-right:5px;color:#0a0a5a"></div><div class="c cl" style="left:1093px;top:50px;width:80px;height:24px;text-align:right;padding-right:5px;color:#0a0a5a"></div><div class="c cl" style="left:1173px;top:50px;width:80px;height:24px;text-align:right;padding-right:5px;color:#0a0a5a"></div><div class="c cl" style="left:1253px;top:50px;width:80px;height:24px;text-align:right;padding-right:5px;color:#0a0a5a"></div><div class="c rh" style="left:0;top:74px;width:133px;height:24px;;color:#0a0a5a">Mean</div><div class="c cl" style="left:133px;top:74px;width:80px;height:24px;text-align:right;padding-right:5px;color:#0a0a5a">66.41176</div><div class="c cl" style="left:213px;top:74px;width:80px;height:24px;text-align:right;padding-right:5px;color:#0a0a5a">60.64706</div><div class="c cl" style="left:293px;top:74px;width:80px;height:24px;text-align:right;padding-right:5px;color:#0a0a5a">70.29412</div><div class="c cl" style="left:373px;top:74px;width:80px;height:24px;text-align:right;padding-right:5px;color:#0a0a5a">64.29412</div><div class="c cl" style="left:453px;top:74px;width:80px;height:24px;text-align:right;padding-right:5px;color:#0a0a5a">68.17647</div><div class="c cl" style="left:533px;top:74px;width:80px;height:24px;text-align:right;padding-right:5px;color:#0a0a5a">104.3333</div><div class="c cl" style="left:613px;top:74px;width:80px;height:24px;text-align:right;padding-right:5px;color:#0a0a5a"></div><div class="c cl" style="left:693px;top:74px;width:80px;height:24px;text-align:right;padding-right:5px;color:#0a0a5a"></div><div class="c cl" style="left:773px;top:74px;width:80px;height:24px;text-align:right;padding-right:5px;color:#0a0a5a"></div><div class="c cl" style="left:853px;top:74px;width:80px;height:24px;text-align:right;padding-right:5px;color:#0a0a5a"></div><div class="c cl" style="left:933px;top:74px;width:80px;height:24px;text-align:right;padding-right:5px;color:#0a0a5a"></div><div class="c cl" style="left:1013px;top:74px;width:80px;height:24px;text-align:right;padding-right:5px;color:#0a0a5a"></div><div class="c cl" style="left:1093px;top:74px;width:80px;height:24px;text-align:right;padding-right:5px;color:#0a0a5a"></div><div class="c cl" style="left:1173px;top:74px;width:80px;height:24px;text-align:right;padding-right:5px;color:#0a0a5a"></div><div class="c cl" style="left:1253px;top:74px;width:80px;height:24px;text-align:right;padding-right:5px;color:#0a0a5a"></div><div class="c rh" style="left:0;top:98px;width:133px;height:24px;;color:#0a0a5a">Median</div><div class="c cl" style="left:133px;top:98px;width:80px;height:24px;text-align:right;padding-right:5px;color:#0a0a5a">69</div><div class="c cl" style="left:213px;top:98px;width:80px;height:24px;text-align:right;padding-right:5px;color:#0a0a5a">62</div><div class="c cl" style="left:293px;top:98px;width:80px;height:24px;text-align:right;padding-right:5px;color:#0a0a5a">72</div><div class="c cl" style="left:373px;top:98px;width:80px;height:24px;text-align:right;padding-right:5px;color:#0a0a5a">65</div><div class="c cl" style="left:453px;top:98px;width:80px;height:24px;text-align:right;padding-right:5px;color:#0a0a5a">64</div><div class="c cl" style="left:533px;top:98px;width:80px;height:24px;text-align:right;padding-right:5px;color:#0a0a5a">102</div><div class="c cl" style="left:613px;top:98px;width:80px;height:24px;text-align:right;padding-right:5px;color:#0a0a5a"></div><div class="c cl" style="left:693px;top:98px;width:80px;height:24px;text-align:right;padding-right:5px;color:#0a0a5a"></div><div class="c cl" style="left:773px;top:98px;width:80px;height:24px;text-align:right;padding-right:5px;color:#0a0a5a"></div><div class="c cl" style="left:853px;top:98px;width:80px;height:24px;text-align:right;padding-right:5px;color:#0a0a5a"></div><div class="c cl" style="left:933px;top:98px;width:80px;height:24px;text-align:right;padding-right:5px;color:#0a0a5a"></div><div class="c cl" style="left:1013px;top:98px;width:80px;height:24px;text-align:right;padding-right:5px;color:#0a0a5a"></div><div class="c cl" style="left:1093px;top:98px;width:80px;height:24px;text-align:right;padding-right:5px;color:#0a0a5a"></div><div class="c cl" style="left:1173px;top:98px;width:80px;height:24px;text-align:right;padding-right:5px;color:#0a0a5a"></div><div class="c cl" style="left:1253px;top:98px;width:80px;height:24px;text-align:right;padding-right:5px;color:#0a0a5a"></div><div class="c rh" style="left:0;top:122px;width:133px;height:24px;;color:#0a0a5a">SD</div><div class="c cl" style="left:133px;top:122px;width:80px;height:24px;text-align:right;padding-right:5px;color:#0a0a5a">16.91914</div><div class="c cl" style="left:213px;top:122px;width:80px;height:24px;text-align:right;padding-right:5px;color:#0a0a5a">18.35395</div><div class="c cl" style="left:293px;top:122px;width:80px;height:24px;text-align:right;padding-right:5px;color:#0a0a5a">15.04063</div><div class="c cl" style="left:373px;top:122px;width:80px;height:24px;text-align:right;padding-right:5px;color:#0a0a5a">13.62793</div><div class="c cl" style="left:453px;top:122px;width:80px;height:24px;text-align:right;padding-right:5px;color:#0a0a5a">16.00092</div><div class="c cl" style="left:533px;top:122px;width:80px;height:24px;text-align:right;padding-right:5px;color:#0a0a5a">11.0173</div><div class="c cl" style="left:613px;top:122px;width:80px;height:24px;text-align:right;padding-right:5px;color:#0a0a5a"></div><div class="c cl" style="left:693px;top:122px;width:80px;height:24px;text-align:right;padding-right:5px;color:#0a0a5a"></div><div class="c cl" style="left:773px;top:122px;width:80px;height:24px;text-align:right;padding-right:5px;color:#0a0a5a"></div><div class="c cl" style="left:853px;top:122px;width:80px;height:24px;text-align:right;padding-right:5px;color:#0a0a5a"></div><div class="c cl" style="left:933px;top:122px;width:80px;height:24px;text-align:right;padding-right:5px;color:#0a0a5a"></div><div class="c cl" style="left:1013px;top:122px;width:80px;height:24px;text-align:right;padding-right:5px;color:#0a0a5a"></div><div class="c cl" style="left:1093px;top:122px;width:80px;height:24px;text-align:right;padding-right:5px;color:#0a0a5a"></div><div class="c cl" style="left:1173px;top:122px;width:80px;height:24px;text-align:right;padding-right:5px;color:#0a0a5a"></div><div class="c cl" style="left:1253px;top:122px;width:80px;height:24px;text-align:right;padding-right:5px;color:#0a0a5a"></div></div>
<div class="a" style="left:3px;top:1075px;width:1289px;height:1px;background:#dadada"></div>
<div class="a" style="left:3px;top:1097px;width:1309px;height:38px;background:#dcdcdc;border-top:1px solid #fff"></div>
<div class="t" style="left:9px;top:1106px;font-size:16.2px;color:#1f3a6a">Last Row: 17, Col: 6</div>
<svg class="a" style="left:11px;top:10px" width="23" height="23" viewBox="0 0 23 23">
<defs><radialGradient id="ai" cx="0.5" cy="0.55" r="0.6"><stop offset="0" stop-color="#48c0e8"/><stop offset="1" stop-color="#1e5cb0"/></radialGradient></defs>
<rect x="1" y="1" width="20" height="20" rx="1" fill="url(#ai)"/>
<path d="M1,1 H21 V2.5 L15.5,10.5 L11,9.5 L7,7 L1,13 Z" fill="#595959"/><path d="M1,12.5 L6.5,9 L1.5,20.5 Z" fill="#f2f2f2"/>
<path d="M1.5,20.5 L6.5,9.5 C7.5,8 9,8 11,9.5 L13.5,11 C15,12 16,11.5 17,10 L21.5,3" fill="none" stroke="#fff" stroke-width="1.3"/>
</svg>
<div class="a" style="left:1311px;top:3px;width:1px;height:143px;background:#fff"></div>
<div class="a" style="left:1159px;top:20px;width:12px;height:1px;background:#111"></div>
<div class="a" style="left:1217px;top:15px;width:12px;height:12px;border:1px solid #111;border-radius:2px"></div>
<svg class="a" style="left:1275px;top:14px" width="14" height="14" viewBox="0 0 14 14"><path d="M1.2,1.2 L12.8,12.8 M12.8,1.2 L1.2,12.8" stroke="#111" stroke-width="1.1"/></svg>
<div class="a" style="left:964px;top:1100px;width:84px;height:29px;background:#fff;border:1px solid #7a7a7a;border-radius:2px"></div>
<div class="t" style="left:968px;top:1105px;font-size:16.5px;color:#000">100%</div>
<svg class="a" style="left:1032px;top:1110px" width="12" height="8"><path d="M1,1.5 L5.5,6 L10,1.5" fill="none" stroke="#333" stroke-width="1.1"/></svg>
<svg class="a" style="left:1055px;top:1102px" width="30" height="30" viewBox="0 0 30 30">
<defs><radialGradient id="zb" cx="0.5" cy="0.4" r="0.6"><stop offset="0" stop-color="#ffffff"/><stop offset="1" stop-color="#dcdcdc"/></radialGradient></defs>
<circle cx="14.5" cy="14.4" r="11.3" fill="url(#zb)" stroke="#a4a4a4" stroke-width="1.5"/>
<path d="M8.3,14.4 H20.7" stroke="#5a92dc" stroke-width="3" stroke-linecap="round"/>
</svg>
<div class="a" style="left:1096px;top:1115px;width:154px;height:3px;background:#e8eaea"></div>
<svg class="a" style="left:1152px;top:1106px" width="13" height="24"><path d="M0,0 H13 V16 L6.5,23.5 L0,16 Z" fill="#0078d7"/></svg>
<svg class="a" style="left:1262px;top:1102px" width="30" height="30" viewBox="0 0 30 30">
<defs><radialGradient id="zc" cx="0.5" cy="0.4" r="0.6"><stop offset="0" stop-color="#ffffff"/><stop offset="1" stop-color="#dcdcdc"/></radialGradient></defs>
<circle cx="14.7" cy="14.4" r="11.3" fill="url(#zc)" stroke="#a4a4a4" stroke-width="1.5"/>
<path d="M8.5,14.4 H20.9 M14.7,8.2 V20.6" stroke="#4a88d8" stroke-width="3" stroke-linecap="round"/>
</svg>
<svg class="a" style="left:1298px;top:1120px" width="14" height="14"><g fill="#8a8a8a"><rect x="9" y="1" width="2" height="2"/><rect x="5" y="5" width="2" height="2"/><rect x="9" y="5" width="2" height="2"/><rect x="1" y="9" width="2" height="2"/><rect x="5" y="9" width="2" height="2"/><rect x="9" y="9" width="2" height="2"/></g></svg>
<div class="a" style="left:645px;top:191px;width:24px;height:1px;background:repeating-linear-gradient(90deg,#808080 0 1px,transparent 1px 2px)"></div>
<div class="a" style="left:645px;top:490px;width:24px;height:1px;background:repeating-linear-gradient(90deg,#808080 0 1px,transparent 1px 2px)"></div>
<div class="a" style="left:645px;top:893px;width:24px;height:1px;background:repeating-linear-gradient(90deg,#808080 0 1px,transparent 1px 2px)"></div>
<svg class="a" style="left:117px;top:195px" width="18" height="26"><path d="M16,9 L16,22 L3,22Z" fill="#f4f4f4"/></svg>
<svg class="a" style="left:117px;top:494px" width="18" height="26"><path d="M16,9 L16,22 L3,22Z" fill="#f4f4f4"/></svg>
<svg class="a" style="left:117px;top:933px" width="18" height="26"><path d="M16,9 L16,22 L3,22Z" fill="#f4f4f4"/></svg>
<div class="a" style="left:136px;top:221px;width:80px;height:24px;border:solid #d0d0d0;border-width:1px 1px 2px 1px"></div>
<div class="a" style="left:136px;top:520px;width:81px;height:25px;border:solid #000;border-width:1px 2px 2px 1px"></div>
<div id="frame"></div></body></html>
